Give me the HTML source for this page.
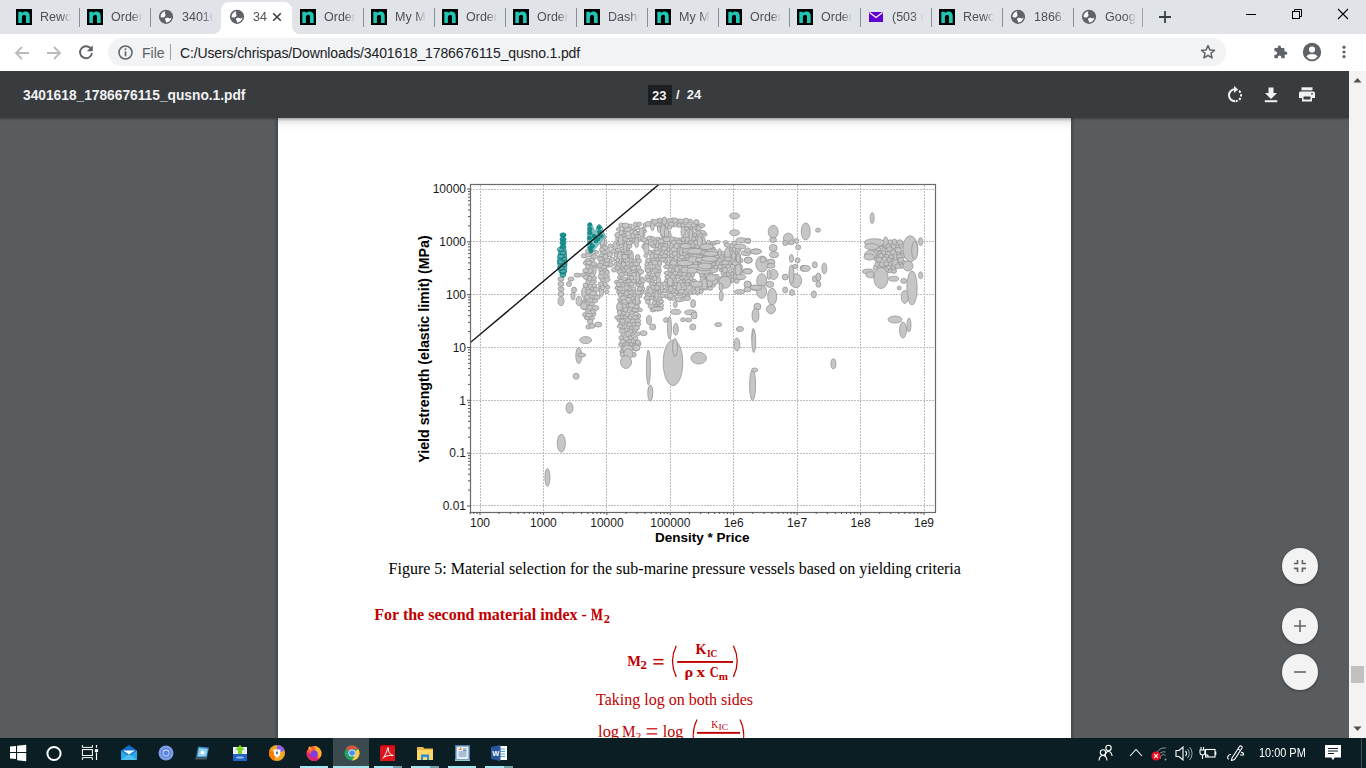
<!DOCTYPE html>
<html><head><meta charset="utf-8"><style>
html,body{margin:0;padding:0;width:1366px;height:768px;overflow:hidden;background:#fff;position:relative;font-family:'Liberation Sans',sans-serif}
</style></head><body>
<!-- TAB STRIP -->
<div style="position:absolute;left:0;top:0;width:1366px;height:34px;background:#e0e3e8"></div>
<div style="position:absolute;left:16px;top:9px;width:16px;height:16px;background:#000"></div><svg style="position:absolute;left:16px;top:9px" width="16" height="16" viewBox="0 0 16 16"><path d="M2.3 14V2.8h3.6v1.3C6.8 3 8 2.4 9.6 2.4c2.6 0 4.1 1.6 4.1 4.5V14H10V7.8c0-1.4-.6-2.1-1.8-2.1-1.3 0-2.3.9-2.3 2.5V14z" fill="#1fc6b4"/></svg>
<div style="position:absolute;left:40px;top:9px;width:31px;height:17px;overflow:hidden;font:12.5px 'Liberation Sans',sans-serif;line-height:16px;color:#4d5054;white-space:nowrap;-webkit-mask-image:linear-gradient(to right,#000 21px,transparent 31px)">Rework</div>
<div style="position:absolute;left:79px;top:8px;width:1px;height:19px;background:#8a8f94"></div>
<div style="position:absolute;left:87px;top:9px;width:16px;height:16px;background:#000"></div><svg style="position:absolute;left:87px;top:9px" width="16" height="16" viewBox="0 0 16 16"><path d="M2.3 14V2.8h3.6v1.3C6.8 3 8 2.4 9.6 2.4c2.6 0 4.1 1.6 4.1 4.5V14H10V7.8c0-1.4-.6-2.1-1.8-2.1-1.3 0-2.3.9-2.3 2.5V14z" fill="#1fc6b4"/></svg>
<div style="position:absolute;left:111px;top:9px;width:31px;height:17px;overflow:hidden;font:12.5px 'Liberation Sans',sans-serif;line-height:16px;color:#4d5054;white-space:nowrap;-webkit-mask-image:linear-gradient(to right,#000 21px,transparent 31px)">Orders</div>
<div style="position:absolute;left:150px;top:8px;width:1px;height:19px;background:#8a8f94"></div>
<svg style="position:absolute;left:158px;top:8px" width="16" height="16" viewBox="0 0 16 16"><circle cx="8" cy="8.85" r="7.1" fill="#5f6368"/><path d="M2.6 9.2A5.5 5.5 0 0 1 7.6 3.3C6.8 4.3 6.4 5.2 7.2 6.1 8 7 7.4 8.6 6 9.2 4.8 9.6 3.7 9.2 2.6 9.2z" fill="#fff"/><path d="M13.5 9.2A5.5 5.5 0 0 1 7.9 14.4C8.3 13.4 7.8 12.6 7.2 12 6.6 11.1 7.6 9.8 9 9.8 10.4 9.8 11.2 11 12.3 10.3 12.9 9.9 13.2 9.5 13.5 9.2z" fill="#fff"/></svg>
<div style="position:absolute;left:182px;top:9px;width:31px;height:17px;overflow:hidden;font:12.5px 'Liberation Sans',sans-serif;line-height:16px;color:#4d5054;white-space:nowrap;-webkit-mask-image:linear-gradient(to right,#000 21px,transparent 31px)">34016</div>
<svg style="position:absolute;left:213px;top:1px" width="87" height="33" viewBox="0 0 87 33"><path d="M0 33a8 8 0 0 0 8-8V9a8 8 0 0 1 8-8h55a8 8 0 0 1 8 8v16a8 8 0 0 0 8 8z" fill="#fff"/></svg>
<svg style="position:absolute;left:229px;top:8px" width="16" height="16" viewBox="0 0 16 16"><circle cx="8" cy="8.85" r="7.1" fill="#5f6368"/><path d="M2.6 9.2A5.5 5.5 0 0 1 7.6 3.3C6.8 4.3 6.4 5.2 7.2 6.1 8 7 7.4 8.6 6 9.2 4.8 9.6 3.7 9.2 2.6 9.2z" fill="#fff"/><path d="M13.5 9.2A5.5 5.5 0 0 1 7.9 14.4C8.3 13.4 7.8 12.6 7.2 12 6.6 11.1 7.6 9.8 9 9.8 10.4 9.8 11.2 11 12.3 10.3 12.9 9.9 13.2 9.5 13.5 9.2z" fill="#fff"/></svg>
<div style="position:absolute;left:253px;top:9px;width:27px;height:17px;overflow:hidden;font:12.5px 'Liberation Sans',sans-serif;line-height:16px;color:#4d5054;white-space:nowrap;-webkit-mask-image:linear-gradient(to right,#000 17px,transparent 27px)">34</div>
<svg style="position:absolute;left:271px;top:11px" width="12" height="12" viewBox="0 0 12 12"><path d="M2.2 2.2l7.6 7.6M9.8 2.2L2.2 9.8" stroke="#3c4043" stroke-width="1.6"/></svg>
<div style="position:absolute;left:300px;top:9px;width:16px;height:16px;background:#000"></div><svg style="position:absolute;left:300px;top:9px" width="16" height="16" viewBox="0 0 16 16"><path d="M2.3 14V2.8h3.6v1.3C6.8 3 8 2.4 9.6 2.4c2.6 0 4.1 1.6 4.1 4.5V14H10V7.8c0-1.4-.6-2.1-1.8-2.1-1.3 0-2.3.9-2.3 2.5V14z" fill="#1fc6b4"/></svg>
<div style="position:absolute;left:324px;top:9px;width:31px;height:17px;overflow:hidden;font:12.5px 'Liberation Sans',sans-serif;line-height:16px;color:#4d5054;white-space:nowrap;-webkit-mask-image:linear-gradient(to right,#000 21px,transparent 31px)">Orders</div>
<div style="position:absolute;left:363px;top:8px;width:1px;height:19px;background:#8a8f94"></div>
<div style="position:absolute;left:371px;top:9px;width:16px;height:16px;background:#000"></div><svg style="position:absolute;left:371px;top:9px" width="16" height="16" viewBox="0 0 16 16"><path d="M2.3 14V2.8h3.6v1.3C6.8 3 8 2.4 9.6 2.4c2.6 0 4.1 1.6 4.1 4.5V14H10V7.8c0-1.4-.6-2.1-1.8-2.1-1.3 0-2.3.9-2.3 2.5V14z" fill="#1fc6b4"/></svg>
<div style="position:absolute;left:395px;top:9px;width:31px;height:17px;overflow:hidden;font:12.5px 'Liberation Sans',sans-serif;line-height:16px;color:#4d5054;white-space:nowrap;-webkit-mask-image:linear-gradient(to right,#000 21px,transparent 31px)">My M</div>
<div style="position:absolute;left:434px;top:8px;width:1px;height:19px;background:#8a8f94"></div>
<div style="position:absolute;left:442px;top:9px;width:16px;height:16px;background:#000"></div><svg style="position:absolute;left:442px;top:9px" width="16" height="16" viewBox="0 0 16 16"><path d="M2.3 14V2.8h3.6v1.3C6.8 3 8 2.4 9.6 2.4c2.6 0 4.1 1.6 4.1 4.5V14H10V7.8c0-1.4-.6-2.1-1.8-2.1-1.3 0-2.3.9-2.3 2.5V14z" fill="#1fc6b4"/></svg>
<div style="position:absolute;left:466px;top:9px;width:31px;height:17px;overflow:hidden;font:12.5px 'Liberation Sans',sans-serif;line-height:16px;color:#4d5054;white-space:nowrap;-webkit-mask-image:linear-gradient(to right,#000 21px,transparent 31px)">Orders</div>
<div style="position:absolute;left:505px;top:8px;width:1px;height:19px;background:#8a8f94"></div>
<div style="position:absolute;left:513px;top:9px;width:16px;height:16px;background:#000"></div><svg style="position:absolute;left:513px;top:9px" width="16" height="16" viewBox="0 0 16 16"><path d="M2.3 14V2.8h3.6v1.3C6.8 3 8 2.4 9.6 2.4c2.6 0 4.1 1.6 4.1 4.5V14H10V7.8c0-1.4-.6-2.1-1.8-2.1-1.3 0-2.3.9-2.3 2.5V14z" fill="#1fc6b4"/></svg>
<div style="position:absolute;left:537px;top:9px;width:31px;height:17px;overflow:hidden;font:12.5px 'Liberation Sans',sans-serif;line-height:16px;color:#4d5054;white-space:nowrap;-webkit-mask-image:linear-gradient(to right,#000 21px,transparent 31px)">Orders</div>
<div style="position:absolute;left:576px;top:8px;width:1px;height:19px;background:#8a8f94"></div>
<div style="position:absolute;left:584px;top:9px;width:16px;height:16px;background:#000"></div><svg style="position:absolute;left:584px;top:9px" width="16" height="16" viewBox="0 0 16 16"><path d="M2.3 14V2.8h3.6v1.3C6.8 3 8 2.4 9.6 2.4c2.6 0 4.1 1.6 4.1 4.5V14H10V7.8c0-1.4-.6-2.1-1.8-2.1-1.3 0-2.3.9-2.3 2.5V14z" fill="#1fc6b4"/></svg>
<div style="position:absolute;left:608px;top:9px;width:31px;height:17px;overflow:hidden;font:12.5px 'Liberation Sans',sans-serif;line-height:16px;color:#4d5054;white-space:nowrap;-webkit-mask-image:linear-gradient(to right,#000 21px,transparent 31px)">Dashb</div>
<div style="position:absolute;left:647px;top:8px;width:1px;height:19px;background:#8a8f94"></div>
<div style="position:absolute;left:655px;top:9px;width:16px;height:16px;background:#000"></div><svg style="position:absolute;left:655px;top:9px" width="16" height="16" viewBox="0 0 16 16"><path d="M2.3 14V2.8h3.6v1.3C6.8 3 8 2.4 9.6 2.4c2.6 0 4.1 1.6 4.1 4.5V14H10V7.8c0-1.4-.6-2.1-1.8-2.1-1.3 0-2.3.9-2.3 2.5V14z" fill="#1fc6b4"/></svg>
<div style="position:absolute;left:679px;top:9px;width:31px;height:17px;overflow:hidden;font:12.5px 'Liberation Sans',sans-serif;line-height:16px;color:#4d5054;white-space:nowrap;-webkit-mask-image:linear-gradient(to right,#000 21px,transparent 31px)">My M</div>
<div style="position:absolute;left:718px;top:8px;width:1px;height:19px;background:#8a8f94"></div>
<div style="position:absolute;left:726px;top:9px;width:16px;height:16px;background:#000"></div><svg style="position:absolute;left:726px;top:9px" width="16" height="16" viewBox="0 0 16 16"><path d="M2.3 14V2.8h3.6v1.3C6.8 3 8 2.4 9.6 2.4c2.6 0 4.1 1.6 4.1 4.5V14H10V7.8c0-1.4-.6-2.1-1.8-2.1-1.3 0-2.3.9-2.3 2.5V14z" fill="#1fc6b4"/></svg>
<div style="position:absolute;left:750px;top:9px;width:31px;height:17px;overflow:hidden;font:12.5px 'Liberation Sans',sans-serif;line-height:16px;color:#4d5054;white-space:nowrap;-webkit-mask-image:linear-gradient(to right,#000 21px,transparent 31px)">Orders</div>
<div style="position:absolute;left:789px;top:8px;width:1px;height:19px;background:#8a8f94"></div>
<div style="position:absolute;left:797px;top:9px;width:16px;height:16px;background:#000"></div><svg style="position:absolute;left:797px;top:9px" width="16" height="16" viewBox="0 0 16 16"><path d="M2.3 14V2.8h3.6v1.3C6.8 3 8 2.4 9.6 2.4c2.6 0 4.1 1.6 4.1 4.5V14H10V7.8c0-1.4-.6-2.1-1.8-2.1-1.3 0-2.3.9-2.3 2.5V14z" fill="#1fc6b4"/></svg>
<div style="position:absolute;left:821px;top:9px;width:31px;height:17px;overflow:hidden;font:12.5px 'Liberation Sans',sans-serif;line-height:16px;color:#4d5054;white-space:nowrap;-webkit-mask-image:linear-gradient(to right,#000 21px,transparent 31px)">Orders</div>
<div style="position:absolute;left:860px;top:8px;width:1px;height:19px;background:#8a8f94"></div>
<svg style="position:absolute;left:868px;top:9px" width="16" height="16" viewBox="0 0 16 16"><rect x="1" y="3" width="14" height="10" fill="#6001d2"/><path d="M1.5 3.5L8 8.5l6.5-5" fill="none" stroke="#fff" stroke-width="1.3"/></svg>
<div style="position:absolute;left:892px;top:9px;width:31px;height:17px;overflow:hidden;font:12.5px 'Liberation Sans',sans-serif;line-height:16px;color:#4d5054;white-space:nowrap;-webkit-mask-image:linear-gradient(to right,#000 21px,transparent 31px)">(503 u</div>
<div style="position:absolute;left:931px;top:8px;width:1px;height:19px;background:#8a8f94"></div>
<div style="position:absolute;left:939px;top:9px;width:16px;height:16px;background:#000"></div><svg style="position:absolute;left:939px;top:9px" width="16" height="16" viewBox="0 0 16 16"><path d="M2.3 14V2.8h3.6v1.3C6.8 3 8 2.4 9.6 2.4c2.6 0 4.1 1.6 4.1 4.5V14H10V7.8c0-1.4-.6-2.1-1.8-2.1-1.3 0-2.3.9-2.3 2.5V14z" fill="#1fc6b4"/></svg>
<div style="position:absolute;left:963px;top:9px;width:31px;height:17px;overflow:hidden;font:12.5px 'Liberation Sans',sans-serif;line-height:16px;color:#4d5054;white-space:nowrap;-webkit-mask-image:linear-gradient(to right,#000 21px,transparent 31px)">Rework</div>
<div style="position:absolute;left:1002px;top:8px;width:1px;height:19px;background:#8a8f94"></div>
<svg style="position:absolute;left:1010px;top:8px" width="16" height="16" viewBox="0 0 16 16"><circle cx="8" cy="8.85" r="7.1" fill="#5f6368"/><path d="M2.6 9.2A5.5 5.5 0 0 1 7.6 3.3C6.8 4.3 6.4 5.2 7.2 6.1 8 7 7.4 8.6 6 9.2 4.8 9.6 3.7 9.2 2.6 9.2z" fill="#fff"/><path d="M13.5 9.2A5.5 5.5 0 0 1 7.9 14.4C8.3 13.4 7.8 12.6 7.2 12 6.6 11.1 7.6 9.8 9 9.8 10.4 9.8 11.2 11 12.3 10.3 12.9 9.9 13.2 9.5 13.5 9.2z" fill="#fff"/></svg>
<div style="position:absolute;left:1034px;top:9px;width:31px;height:17px;overflow:hidden;font:12.5px 'Liberation Sans',sans-serif;line-height:16px;color:#4d5054;white-space:nowrap;-webkit-mask-image:linear-gradient(to right,#000 21px,transparent 31px)">18661</div>
<div style="position:absolute;left:1073px;top:8px;width:1px;height:19px;background:#8a8f94"></div>
<svg style="position:absolute;left:1081px;top:8px" width="16" height="16" viewBox="0 0 16 16"><circle cx="8" cy="8.85" r="7.1" fill="#5f6368"/><path d="M2.6 9.2A5.5 5.5 0 0 1 7.6 3.3C6.8 4.3 6.4 5.2 7.2 6.1 8 7 7.4 8.6 6 9.2 4.8 9.6 3.7 9.2 2.6 9.2z" fill="#fff"/><path d="M13.5 9.2A5.5 5.5 0 0 1 7.9 14.4C8.3 13.4 7.8 12.6 7.2 12 6.6 11.1 7.6 9.8 9 9.8 10.4 9.8 11.2 11 12.3 10.3 12.9 9.9 13.2 9.5 13.5 9.2z" fill="#fff"/></svg>
<div style="position:absolute;left:1105px;top:9px;width:31px;height:17px;overflow:hidden;font:12.5px 'Liberation Sans',sans-serif;line-height:16px;color:#4d5054;white-space:nowrap;-webkit-mask-image:linear-gradient(to right,#000 21px,transparent 31px)">Google</div>
<!-- TOOLBAR -->
<div style="position:absolute;left:0;top:34px;width:1366px;height:37px;background:#fff"></div>
<div style="position:absolute;left:108px;top:38px;width:1118px;height:28px;border-radius:14px;background:#f1f3f4"></div>
<!-- back/forward/reload -->
<svg style="position:absolute;left:13px;top:44px" width="18" height="18" viewBox="0 0 18 18"><path d="M16 9H3.5M9 3L3 9l6 6" fill="none" stroke="#b9bcbf" stroke-width="1.8"/></svg>
<svg style="position:absolute;left:45px;top:44px" width="18" height="18" viewBox="0 0 18 18"><path d="M2 9h12.5M9 3l6 6-6 6" fill="none" stroke="#b9bcbf" stroke-width="1.8"/></svg>
<svg style="position:absolute;left:77px;top:43px" width="18" height="18" viewBox="0 0 18 18"><path d="M14.2 6.2A6 6 0 1 0 15 10" fill="none" stroke="#5f6368" stroke-width="1.9"/><path d="M15.8 2.2v6h-6z" fill="#5f6368"/></svg>
<svg style="position:absolute;left:118px;top:45px" width="15" height="15" viewBox="0 0 15 15"><circle cx="7.5" cy="7.5" r="6.5" fill="none" stroke="#5f6368" stroke-width="1.5"/><rect x="6.7" y="6.3" width="1.6" height="5" fill="#5f6368"/><rect x="6.7" y="3.4" width="1.6" height="1.7" fill="#5f6368"/></svg>
<div style="position:absolute;left:142px;top:44px;font:14px 'Liberation Sans',sans-serif;color:#5f6368;line-height:18px">File</div>
<div style="position:absolute;left:170px;top:44px;width:1px;height:16px;background:#9aa0a6"></div>
<div style="position:absolute;left:180px;top:44px;font:14px 'Liberation Sans',sans-serif;letter-spacing:-0.13px;color:#202124;line-height:18px;white-space:nowrap">C:/Users/chrispas/Downloads/3401618_1786676115_qusno.1.pdf</div>
<!-- star -->
<svg style="position:absolute;left:1200px;top:44px" width="16" height="16" viewBox="0 0 16 16"><path d="M8 1.6l1.9 4.3 4.6.4-3.5 3 1.1 4.6L8 11.5l-4.1 2.4L5 9.3 1.5 6.3l4.6-.4z" fill="none" stroke="#5f6368" stroke-width="1.5" stroke-linejoin="round"/></svg>
<!-- puzzle -->
<svg style="position:absolute;left:1272px;top:44px" width="16" height="16" viewBox="0 0 16 16"><path d="M13.5 7.5h-1V5c0-.6-.4-1-1-1H9V3a1.6 1.6 0 0 0-3.2 0v1H3.4c-.6 0-1 .4-1 1v2.3h.9a1.8 1.8 0 0 1 0 3.6h-.9v2.4c0 .6.4 1 1 1h2.4v-.9a1.8 1.8 0 0 1 3.6 0v.9h2.3c.6 0 1-.4 1-1v-2.5h1a1.6 1.6 0 0 0 0-3.3z" fill="#5f6368"/></svg>
<!-- profile -->
<svg style="position:absolute;left:1302px;top:42px" width="20" height="20" viewBox="0 0 20 20"><circle cx="10" cy="10" r="9.2" fill="#5f6368"/><circle cx="10" cy="7.6" r="3.1" fill="#fff"/><path d="M4.3 14.6c1.2-1.8 3.4-2.6 5.7-2.6s4.5.8 5.7 2.6A7.2 7.2 0 0 1 10 17.4a7.2 7.2 0 0 1-5.7-2.8z" fill="#fff"/></svg>
<!-- kebab -->
<svg style="position:absolute;left:1341px;top:44px" width="6" height="16" viewBox="0 0 6 16"><circle cx="3" cy="3.2" r="1.6" fill="#5f6368"/><circle cx="3" cy="8" r="1.6" fill="#5f6368"/><circle cx="3" cy="12.6" r="1.6" fill="#5f6368"/></svg>
<!-- window controls -->
<div style="position:absolute;left:1246px;top:14px;width:10px;height:1px;background:#000"></div>
<svg style="position:absolute;left:1291px;top:8px" width="12" height="12" viewBox="0 0 12 12"><rect x="1.5" y="3.5" width="7" height="7" fill="none" stroke="#000" stroke-width="1"/><path d="M3.5 3.5V1.5h7v7H8.5" fill="none" stroke="#000" stroke-width="1"/></svg>
<svg style="position:absolute;left:1337px;top:8px" width="12" height="12" viewBox="0 0 12 12"><path d="M1 1l10 10M11 1L1 11" stroke="#000" stroke-width="1.1"/></svg>
<!-- new tab plus -->
<div style="position:absolute;left:1142px;top:8px;width:1px;height:19px;background:#9aa0a6"></div>
<svg style="position:absolute;left:1158px;top:10px" width="14" height="14" viewBox="0 0 14 14"><path d="M7 1v12M1 7h12" stroke="#3c4043" stroke-width="1.8"/></svg>

<!-- PDF TOOLBAR -->
<div style="position:absolute;left:0;top:71px;width:1349px;height:47px;background:#383c3f"></div>
<div style="position:absolute;left:0;top:118px;width:1349px;height:620px;background:#585c5f"></div>
<div style="position:absolute;left:23px;top:87px;font:bold 13.75px 'Liberation Sans',sans-serif;color:#f1f1f1;line-height:18px;white-space:nowrap">3401618_1786676115_qusno.1.pdf</div>
<div style="position:absolute;left:648px;top:85px;width:24px;height:20px;background:#1c1e1f"></div>
<div style="position:absolute;left:652px;top:88px;font:bold 13px 'Liberation Sans',sans-serif;color:#f1f1f1;line-height:16px">23</div>
<div style="position:absolute;left:676px;top:87px;font:bold 13px 'Liberation Sans',sans-serif;color:#f1f1f1;line-height:16px;white-space:nowrap">/&nbsp;&nbsp;24</div>
<!-- rotate -->
<svg style="position:absolute;left:1225px;top:84px" width="20" height="20" viewBox="0 0 20 20"><path d="M10 5.3A6 6 0 1 0 10 17.3" fill="none" stroke="#f1f1f1" stroke-width="2"/><path d="M10.6 17.3A6 6 0 0 0 12.5 5.85" fill="none" stroke="#f1f1f1" stroke-width="2" stroke-dasharray="2.2,1.6"/><path d="M9 1.8l4 3.7-4 3.5z" fill="#f1f1f1"/></svg>
<!-- download -->
<svg style="position:absolute;left:1262px;top:85px" width="18" height="18" viewBox="0 0 18 18"><path d="M6.5 2.5h5v5.5h3.5L9 14 3 8h3.5z" fill="#f1f1f1"/><rect x="2.8" y="15.2" width="12.4" height="2" fill="#f1f1f1"/></svg>
<!-- print -->
<svg style="position:absolute;left:1298px;top:85px" width="18" height="18" viewBox="0 0 18 18"><rect x="3.5" y="2.3" width="11" height="3" fill="#f1f1f1"/><path d="M2.5 6.5h13a1.5 1.5 0 0 1 1.5 1.5v5h-3v3.5H4V13H1V8a1.5 1.5 0 0 1 1.5-1.5z" fill="#f1f1f1"/><rect x="5.5" y="11.5" width="7" height="3" fill="#383c3f"/><circle cx="14" cy="8.8" r=".9" fill="#383c3f"/></svg>

<!-- SCROLLBAR -->
<div style="position:absolute;left:1349px;top:71px;width:17px;height:667px;background:#f3f3f3"></div>
<svg style="position:absolute;left:1353px;top:77px" width="9" height="6" viewBox="0 0 9 6"><path d="M0.5 5.5L4.5 1l4 4.5z" fill="#505050"/></svg>
<svg style="position:absolute;left:1353px;top:726px" width="9" height="6" viewBox="0 0 9 6"><path d="M0.5 .5L4.5 5l4-4.5z" fill="#505050"/></svg>
<div style="position:absolute;left:1351px;top:666px;width:13px;height:17px;background:#c1c1c1"></div>

<!-- FABs -->
<div style="position:absolute;left:1282px;top:548px;width:36px;height:36px;border-radius:50%;background:#f3f3f3;box-shadow:0 1px 3px rgba(0,0,0,.3)"></div>
<svg style="position:absolute;left:1291px;top:557px" width="18" height="18" viewBox="0 0 18 18"><path d="M6.5 2.9V6.5H2.9M11.4 2.9V6.5H15M6.5 15V11.4H2.9M11.4 15V11.4H15" fill="none" stroke="#5f6368" stroke-width="1.6"/></svg>
<div style="position:absolute;left:1282px;top:608px;width:36px;height:36px;border-radius:50%;background:#f3f3f3;box-shadow:0 1px 3px rgba(0,0,0,.3)"></div>
<svg style="position:absolute;left:1291px;top:617px" width="18" height="18" viewBox="0 0 18 18"><path d="M9 3v12M3 9h12" stroke="#666" stroke-width="1.6"/></svg>
<div style="position:absolute;left:1282px;top:654px;width:36px;height:36px;border-radius:50%;background:#f3f3f3;box-shadow:0 1px 3px rgba(0,0,0,.3)"></div>
<svg style="position:absolute;left:1291px;top:663px" width="18" height="18" viewBox="0 0 18 18"><path d="M3 9h12" stroke="#666" stroke-width="1.6"/></svg>

<!-- PAGE -->
<div style="position:absolute;left:274px;top:118px;width:801px;height:620px;background:linear-gradient(to right,rgba(0,0,0,0),rgba(0,0,0,.22) 4px,rgba(0,0,0,0) 4px,rgba(0,0,0,0) 797px,rgba(0,0,0,.22) 797px,rgba(0,0,0,0))"></div>
<div style="position:absolute;left:278px;top:118px;width:793px;height:620px;background:#fff;overflow:hidden">
<svg style="position:absolute;left:-278px;top:-118px" width="1366" height="768" viewBox="0 0 1366 768">
<defs><clipPath id="pc"><rect x="470" y="184" width="465" height="328"/></clipPath></defs>
<line x1="480.5" y1="185" x2="480.5" y2="512" stroke="#bcbcbc" stroke-width="1" stroke-dasharray="2,1"/><line x1="543.5" y1="185" x2="543.5" y2="512" stroke="#bcbcbc" stroke-width="1" stroke-dasharray="2,1"/><line x1="606.5" y1="185" x2="606.5" y2="512" stroke="#bcbcbc" stroke-width="1" stroke-dasharray="2,1"/><line x1="670.5" y1="185" x2="670.5" y2="512" stroke="#bcbcbc" stroke-width="1" stroke-dasharray="2,1"/><line x1="733.5" y1="185" x2="733.5" y2="512" stroke="#bcbcbc" stroke-width="1" stroke-dasharray="2,1"/><line x1="797.5" y1="185" x2="797.5" y2="512" stroke="#bcbcbc" stroke-width="1" stroke-dasharray="2,1"/><line x1="860.5" y1="185" x2="860.5" y2="512" stroke="#bcbcbc" stroke-width="1" stroke-dasharray="2,1"/><line x1="924.5" y1="185" x2="924.5" y2="512" stroke="#bcbcbc" stroke-width="1" stroke-dasharray="2,1"/><line x1="470" y1="505.5" x2="935" y2="505.5" stroke="#bcbcbc" stroke-width="1" stroke-dasharray="2,1"/><line x1="470" y1="453.5" x2="935" y2="453.5" stroke="#bcbcbc" stroke-width="1" stroke-dasharray="2,1"/><line x1="470" y1="400.5" x2="935" y2="400.5" stroke="#bcbcbc" stroke-width="1" stroke-dasharray="2,1"/><line x1="470" y1="347.5" x2="935" y2="347.5" stroke="#bcbcbc" stroke-width="1" stroke-dasharray="2,1"/><line x1="470" y1="294.5" x2="935" y2="294.5" stroke="#bcbcbc" stroke-width="1" stroke-dasharray="2,1"/><line x1="470" y1="241.5" x2="935" y2="241.5" stroke="#bcbcbc" stroke-width="1" stroke-dasharray="2,1"/><line x1="470" y1="189.5" x2="935" y2="189.5" stroke="#bcbcbc" stroke-width="1" stroke-dasharray="2,1"/>
<g clip-path="url(#pc)">
<ellipse cx="591.6" cy="303.8" rx="2.9" ry="2.0" fill="#c6c6c6" stroke="#939393" stroke-width="0.75"/><ellipse cx="591.2" cy="296.4" rx="3.6" ry="2.2" fill="#c6c6c6" stroke="#939393" stroke-width="0.75"/><ellipse cx="587.0" cy="274.5" rx="2.7" ry="4.5" fill="#c6c6c6" stroke="#939393" stroke-width="0.75"/><ellipse cx="583.7" cy="274.8" rx="3.4" ry="1.9" fill="#c6c6c6" stroke="#939393" stroke-width="0.75"/><ellipse cx="595.7" cy="252.3" rx="3.2" ry="1.9" fill="#c6c6c6" stroke="#939393" stroke-width="0.75"/><ellipse cx="586.2" cy="262.9" rx="2.9" ry="2.2" fill="#c6c6c6" stroke="#939393" stroke-width="0.75"/><ellipse cx="591.0" cy="317.8" rx="3.5" ry="2.3" fill="#c6c6c6" stroke="#939393" stroke-width="0.75"/><ellipse cx="586.1" cy="300.9" rx="3.3" ry="1.9" fill="#c6c6c6" stroke="#939393" stroke-width="0.75"/><ellipse cx="594.2" cy="300.9" rx="3.6" ry="1.8" fill="#c6c6c6" stroke="#939393" stroke-width="0.75"/><ellipse cx="587.2" cy="317.6" rx="2.9" ry="2.3" fill="#c6c6c6" stroke="#939393" stroke-width="0.75"/><ellipse cx="584.2" cy="255.8" rx="3.1" ry="2.1" fill="#c6c6c6" stroke="#939393" stroke-width="0.75"/><ellipse cx="588.4" cy="326.9" rx="2.5" ry="2.2" fill="#c6c6c6" stroke="#939393" stroke-width="0.75"/><ellipse cx="584.2" cy="292.7" rx="2.6" ry="5.7" fill="#c6c6c6" stroke="#939393" stroke-width="0.75"/><ellipse cx="588.9" cy="255.2" rx="3.3" ry="1.9" fill="#c6c6c6" stroke="#939393" stroke-width="0.75"/><ellipse cx="584.1" cy="307.3" rx="2.6" ry="2.4" fill="#c6c6c6" stroke="#939393" stroke-width="0.75"/><ellipse cx="588.0" cy="290.1" rx="1.9" ry="5.0" fill="#c6c6c6" stroke="#939393" stroke-width="0.75"/><ellipse cx="588.0" cy="251.4" rx="2.7" ry="2.2" fill="#c6c6c6" stroke="#939393" stroke-width="0.75"/><ellipse cx="587.9" cy="266.8" rx="2.4" ry="2.3" fill="#c6c6c6" stroke="#939393" stroke-width="0.75"/><ellipse cx="589.5" cy="270.9" rx="3.2" ry="2.4" fill="#c6c6c6" stroke="#939393" stroke-width="0.75"/><ellipse cx="589.4" cy="300.0" rx="3.4" ry="2.4" fill="#c6c6c6" stroke="#939393" stroke-width="0.75"/><ellipse cx="590.7" cy="286.3" rx="2.5" ry="2.2" fill="#c6c6c6" stroke="#939393" stroke-width="0.75"/><ellipse cx="596.9" cy="297.2" rx="3.3" ry="2.2" fill="#c6c6c6" stroke="#939393" stroke-width="0.75"/><ellipse cx="592.3" cy="266.1" rx="2.5" ry="1.9" fill="#c6c6c6" stroke="#939393" stroke-width="0.75"/><ellipse cx="593.0" cy="288.7" rx="2.5" ry="1.8" fill="#c6c6c6" stroke="#939393" stroke-width="0.75"/><ellipse cx="587.9" cy="260.6" rx="3.0" ry="2.1" fill="#c6c6c6" stroke="#939393" stroke-width="0.75"/><ellipse cx="593.1" cy="281.4" rx="3.4" ry="1.8" fill="#c6c6c6" stroke="#939393" stroke-width="0.75"/><ellipse cx="594.4" cy="285.7" rx="2.4" ry="1.9" fill="#c6c6c6" stroke="#939393" stroke-width="0.75"/><ellipse cx="585.5" cy="285.3" rx="2.3" ry="2.4" fill="#c6c6c6" stroke="#939393" stroke-width="0.75"/><ellipse cx="584.1" cy="303.1" rx="2.7" ry="2.5" fill="#c6c6c6" stroke="#939393" stroke-width="0.75"/><ellipse cx="592.4" cy="259.5" rx="2.6" ry="2.0" fill="#c6c6c6" stroke="#939393" stroke-width="0.75"/><ellipse cx="586.5" cy="277.3" rx="3.3" ry="2.2" fill="#c6c6c6" stroke="#939393" stroke-width="0.75"/><ellipse cx="592.1" cy="325.9" rx="3.0" ry="2.4" fill="#c6c6c6" stroke="#939393" stroke-width="0.75"/><ellipse cx="589.1" cy="292.0" rx="3.5" ry="2.4" fill="#c6c6c6" stroke="#939393" stroke-width="0.75"/><ellipse cx="585.7" cy="270.6" rx="2.9" ry="2.1" fill="#c6c6c6" stroke="#939393" stroke-width="0.75"/><ellipse cx="593.7" cy="278.0" rx="2.7" ry="2.3" fill="#c6c6c6" stroke="#939393" stroke-width="0.75"/><ellipse cx="593.4" cy="314.0" rx="2.6" ry="2.0" fill="#c6c6c6" stroke="#939393" stroke-width="0.75"/><ellipse cx="595.6" cy="307.9" rx="3.3" ry="2.5" fill="#c6c6c6" stroke="#939393" stroke-width="0.75"/><ellipse cx="586.8" cy="303.3" rx="2.8" ry="2.0" fill="#c6c6c6" stroke="#939393" stroke-width="0.75"/><ellipse cx="590.2" cy="321.5" rx="2.9" ry="2.3" fill="#c6c6c6" stroke="#939393" stroke-width="0.75"/><ellipse cx="594.3" cy="256.6" rx="3.5" ry="1.9" fill="#c6c6c6" stroke="#939393" stroke-width="0.75"/><ellipse cx="592.3" cy="275.1" rx="2.6" ry="2.3" fill="#c6c6c6" stroke="#939393" stroke-width="0.75"/><ellipse cx="588.0" cy="310.3" rx="2.8" ry="2.1" fill="#c6c6c6" stroke="#939393" stroke-width="0.75"/><ellipse cx="585.0" cy="314.7" rx="2.4" ry="2.1" fill="#c6c6c6" stroke="#939393" stroke-width="0.75"/><ellipse cx="587.3" cy="297.2" rx="2.9" ry="2.3" fill="#c6c6c6" stroke="#939393" stroke-width="0.75"/><ellipse cx="589.0" cy="262.6" rx="3.0" ry="2.0" fill="#c6c6c6" stroke="#939393" stroke-width="0.75"/><ellipse cx="588.2" cy="281.9" rx="2.4" ry="2.4" fill="#c6c6c6" stroke="#939393" stroke-width="0.75"/><ellipse cx="588.9" cy="315.1" rx="3.4" ry="1.9" fill="#c6c6c6" stroke="#939393" stroke-width="0.75"/><ellipse cx="595.7" cy="266.4" rx="3.5" ry="1.9" fill="#c6c6c6" stroke="#939393" stroke-width="0.75"/><ellipse cx="592.3" cy="252.0" rx="3.4" ry="2.4" fill="#c6c6c6" stroke="#939393" stroke-width="0.75"/><ellipse cx="593.4" cy="293.3" rx="3.5" ry="2.1" fill="#c6c6c6" stroke="#939393" stroke-width="0.75"/><ellipse cx="594.0" cy="264.0" rx="3.0" ry="2.1" fill="#c6c6c6" stroke="#939393" stroke-width="0.75"/><ellipse cx="589.6" cy="307.6" rx="2.7" ry="2.4" fill="#c6c6c6" stroke="#939393" stroke-width="0.75"/><ellipse cx="596.5" cy="289.4" rx="3.5" ry="2.0" fill="#c6c6c6" stroke="#939393" stroke-width="0.75"/><ellipse cx="594.4" cy="270.3" rx="1.7" ry="4.3" fill="#c6c6c6" stroke="#939393" stroke-width="0.75"/><ellipse cx="593.2" cy="311.7" rx="2.6" ry="2.0" fill="#c6c6c6" stroke="#939393" stroke-width="0.75"/><ellipse cx="589.7" cy="278.6" rx="2.3" ry="2.5" fill="#c6c6c6" stroke="#939393" stroke-width="0.75"/><ellipse cx="602.7" cy="245.1" rx="2.4" ry="6.4" fill="#c6c6c6" stroke="#939393" stroke-width="0.75"/><ellipse cx="606.8" cy="276.6" rx="2.7" ry="1.8" fill="#c6c6c6" stroke="#939393" stroke-width="0.75"/><ellipse cx="607.7" cy="252.6" rx="2.2" ry="4.2" fill="#c6c6c6" stroke="#939393" stroke-width="0.75"/><ellipse cx="607.6" cy="265.5" rx="2.7" ry="1.9" fill="#c6c6c6" stroke="#939393" stroke-width="0.75"/><ellipse cx="601.6" cy="269.6" rx="3.3" ry="1.9" fill="#c6c6c6" stroke="#939393" stroke-width="0.75"/><ellipse cx="604.5" cy="247.8" rx="3.1" ry="2.2" fill="#c6c6c6" stroke="#939393" stroke-width="0.75"/><ellipse cx="603.4" cy="251.8" rx="3.2" ry="2.0" fill="#c6c6c6" stroke="#939393" stroke-width="0.75"/><ellipse cx="603.7" cy="237.3" rx="2.5" ry="2.3" fill="#c6c6c6" stroke="#939393" stroke-width="0.75"/><ellipse cx="602.3" cy="272.8" rx="3.2" ry="1.9" fill="#c6c6c6" stroke="#939393" stroke-width="0.75"/><ellipse cx="607.5" cy="287.1" rx="2.5" ry="1.8" fill="#c6c6c6" stroke="#939393" stroke-width="0.75"/><ellipse cx="604.8" cy="242.6" rx="2.4" ry="2.3" fill="#c6c6c6" stroke="#939393" stroke-width="0.75"/><ellipse cx="601.6" cy="256.1" rx="3.0" ry="2.4" fill="#c6c6c6" stroke="#939393" stroke-width="0.75"/><ellipse cx="605.0" cy="284.5" rx="2.4" ry="2.2" fill="#c6c6c6" stroke="#939393" stroke-width="0.75"/><ellipse cx="606.8" cy="263.8" rx="3.4" ry="1.9" fill="#c6c6c6" stroke="#939393" stroke-width="0.75"/><ellipse cx="602.7" cy="258.8" rx="2.8" ry="2.4" fill="#c6c6c6" stroke="#939393" stroke-width="0.75"/><ellipse cx="601.7" cy="262.1" rx="2.8" ry="2.4" fill="#c6c6c6" stroke="#939393" stroke-width="0.75"/><ellipse cx="603.7" cy="267.1" rx="2.9" ry="2.0" fill="#c6c6c6" stroke="#939393" stroke-width="0.75"/><ellipse cx="602.3" cy="241.2" rx="2.2" ry="4.4" fill="#c6c6c6" stroke="#939393" stroke-width="0.75"/><ellipse cx="601.5" cy="290.2" rx="2.2" ry="6.5" fill="#c6c6c6" stroke="#939393" stroke-width="0.75"/><ellipse cx="600.7" cy="284.3" rx="2.7" ry="2.5" fill="#c6c6c6" stroke="#939393" stroke-width="0.75"/><ellipse cx="606.7" cy="291.7" rx="2.3" ry="1.9" fill="#c6c6c6" stroke="#939393" stroke-width="0.75"/><ellipse cx="601.9" cy="249.7" rx="2.5" ry="2.1" fill="#c6c6c6" stroke="#939393" stroke-width="0.75"/><ellipse cx="599.8" cy="265.4" rx="3.0" ry="2.0" fill="#c6c6c6" stroke="#939393" stroke-width="0.75"/><ellipse cx="600.1" cy="258.9" rx="2.6" ry="2.2" fill="#c6c6c6" stroke="#939393" stroke-width="0.75"/><ellipse cx="602.7" cy="279.8" rx="2.7" ry="1.9" fill="#c6c6c6" stroke="#939393" stroke-width="0.75"/><ellipse cx="607.1" cy="260.1" rx="3.0" ry="2.1" fill="#c6c6c6" stroke="#939393" stroke-width="0.75"/><ellipse cx="605.6" cy="270.8" rx="2.7" ry="2.1" fill="#c6c6c6" stroke="#939393" stroke-width="0.75"/><ellipse cx="607.4" cy="279.6" rx="2.6" ry="2.1" fill="#c6c6c6" stroke="#939393" stroke-width="0.75"/><ellipse cx="600.9" cy="276.6" rx="2.7" ry="2.6" fill="#c6c6c6" stroke="#939393" stroke-width="0.75"/><ellipse cx="602.5" cy="287.7" rx="2.2" ry="2.4" fill="#c6c6c6" stroke="#939393" stroke-width="0.75"/><ellipse cx="607.2" cy="272.4" rx="2.3" ry="2.1" fill="#c6c6c6" stroke="#939393" stroke-width="0.75"/><ellipse cx="605.7" cy="256.6" rx="2.3" ry="2.5" fill="#c6c6c6" stroke="#939393" stroke-width="0.75"/><ellipse cx="610.4" cy="246.1" rx="2.5" ry="2.2" fill="#c6c6c6" stroke="#939393" stroke-width="0.75"/><ellipse cx="611.0" cy="264.8" rx="2.3" ry="2.3" fill="#c6c6c6" stroke="#939393" stroke-width="0.75"/><ellipse cx="615.2" cy="246.7" rx="2.2" ry="5.9" fill="#c6c6c6" stroke="#939393" stroke-width="0.75"/><ellipse cx="616.6" cy="255.2" rx="2.7" ry="2.1" fill="#c6c6c6" stroke="#939393" stroke-width="0.75"/><ellipse cx="612.3" cy="259.4" rx="2.7" ry="2.2" fill="#c6c6c6" stroke="#939393" stroke-width="0.75"/><ellipse cx="614.0" cy="269.9" rx="2.4" ry="2.2" fill="#c6c6c6" stroke="#939393" stroke-width="0.75"/><ellipse cx="609.8" cy="254.5" rx="2.6" ry="2.4" fill="#c6c6c6" stroke="#939393" stroke-width="0.75"/><ellipse cx="616.3" cy="264.3" rx="2.2" ry="2.5" fill="#c6c6c6" stroke="#939393" stroke-width="0.75"/><ellipse cx="613.7" cy="251.2" rx="3.1" ry="2.0" fill="#c6c6c6" stroke="#939393" stroke-width="0.75"/><ellipse cx="638.2" cy="274.3" rx="2.6" ry="2.1" fill="#c6c6c6" stroke="#939393" stroke-width="0.75"/><ellipse cx="635.0" cy="294.9" rx="2.1" ry="2.5" fill="#c6c6c6" stroke="#939393" stroke-width="0.75"/><ellipse cx="631.4" cy="264.1" rx="1.8" ry="4.3" fill="#c6c6c6" stroke="#939393" stroke-width="0.75"/><ellipse cx="620.3" cy="310.5" rx="2.7" ry="2.0" fill="#c6c6c6" stroke="#939393" stroke-width="0.75"/><ellipse cx="634.2" cy="324.2" rx="2.3" ry="2.1" fill="#c6c6c6" stroke="#939393" stroke-width="0.75"/><ellipse cx="629.2" cy="288.6" rx="3.1" ry="2.4" fill="#c6c6c6" stroke="#939393" stroke-width="0.75"/><ellipse cx="618.1" cy="238.7" rx="2.5" ry="2.0" fill="#c6c6c6" stroke="#939393" stroke-width="0.75"/><ellipse cx="619.7" cy="291.8" rx="3.2" ry="2.3" fill="#c6c6c6" stroke="#939393" stroke-width="0.75"/><ellipse cx="630.0" cy="274.8" rx="2.2" ry="2.1" fill="#c6c6c6" stroke="#939393" stroke-width="0.75"/><ellipse cx="633.1" cy="229.7" rx="2.8" ry="1.8" fill="#c6c6c6" stroke="#939393" stroke-width="0.75"/><ellipse cx="621.8" cy="317.1" rx="3.2" ry="1.9" fill="#c6c6c6" stroke="#939393" stroke-width="0.75"/><ellipse cx="630.5" cy="308.9" rx="2.4" ry="2.3" fill="#c6c6c6" stroke="#939393" stroke-width="0.75"/><ellipse cx="641.3" cy="278.5" rx="2.2" ry="1.8" fill="#c6c6c6" stroke="#939393" stroke-width="0.75"/><ellipse cx="633.4" cy="270.6" rx="2.5" ry="2.2" fill="#c6c6c6" stroke="#939393" stroke-width="0.75"/><ellipse cx="631.4" cy="242.3" rx="2.5" ry="1.9" fill="#c6c6c6" stroke="#939393" stroke-width="0.75"/><ellipse cx="623.7" cy="285.3" rx="3.0" ry="1.8" fill="#c6c6c6" stroke="#939393" stroke-width="0.75"/><ellipse cx="627.0" cy="285.0" rx="2.1" ry="2.0" fill="#c6c6c6" stroke="#939393" stroke-width="0.75"/><ellipse cx="622.4" cy="267.0" rx="3.1" ry="2.4" fill="#c6c6c6" stroke="#939393" stroke-width="0.75"/><ellipse cx="626.2" cy="322.8" rx="2.3" ry="2.3" fill="#c6c6c6" stroke="#939393" stroke-width="0.75"/><ellipse cx="628.0" cy="250.7" rx="1.8" ry="4.7" fill="#c6c6c6" stroke="#939393" stroke-width="0.75"/><ellipse cx="627.1" cy="256.0" rx="2.1" ry="5.9" fill="#c6c6c6" stroke="#939393" stroke-width="0.75"/><ellipse cx="622.6" cy="327.5" rx="2.7" ry="2.3" fill="#c6c6c6" stroke="#939393" stroke-width="0.75"/><ellipse cx="623.8" cy="234.8" rx="2.2" ry="2.2" fill="#c6c6c6" stroke="#939393" stroke-width="0.75"/><ellipse cx="629.9" cy="344.0" rx="3.0" ry="2.5" fill="#c6c6c6" stroke="#939393" stroke-width="0.75"/><ellipse cx="633.4" cy="354.6" rx="2.8" ry="2.4" fill="#c6c6c6" stroke="#939393" stroke-width="0.75"/><ellipse cx="630.9" cy="268.3" rx="2.3" ry="2.3" fill="#c6c6c6" stroke="#939393" stroke-width="0.75"/><ellipse cx="626.9" cy="263.3" rx="3.1" ry="2.3" fill="#c6c6c6" stroke="#939393" stroke-width="0.75"/><ellipse cx="638.4" cy="239.3" rx="3.0" ry="2.3" fill="#c6c6c6" stroke="#939393" stroke-width="0.75"/><ellipse cx="621.3" cy="337.9" rx="2.4" ry="2.3" fill="#c6c6c6" stroke="#939393" stroke-width="0.75"/><ellipse cx="631.4" cy="256.7" rx="2.1" ry="5.8" fill="#c6c6c6" stroke="#939393" stroke-width="0.75"/><ellipse cx="624.4" cy="270.2" rx="2.9" ry="1.9" fill="#c6c6c6" stroke="#939393" stroke-width="0.75"/><ellipse cx="621.4" cy="225.3" rx="2.6" ry="2.3" fill="#c6c6c6" stroke="#939393" stroke-width="0.75"/><ellipse cx="628.0" cy="270.0" rx="2.9" ry="2.5" fill="#c6c6c6" stroke="#939393" stroke-width="0.75"/><ellipse cx="625.1" cy="231.5" rx="2.9" ry="2.4" fill="#c6c6c6" stroke="#939393" stroke-width="0.75"/><ellipse cx="637.9" cy="301.9" rx="2.7" ry="2.6" fill="#c6c6c6" stroke="#939393" stroke-width="0.75"/><ellipse cx="625.4" cy="309.9" rx="2.3" ry="4.0" fill="#c6c6c6" stroke="#939393" stroke-width="0.75"/><ellipse cx="632.4" cy="341.0" rx="3.3" ry="2.2" fill="#c6c6c6" stroke="#939393" stroke-width="0.75"/><ellipse cx="641.1" cy="284.8" rx="2.3" ry="5.1" fill="#c6c6c6" stroke="#939393" stroke-width="0.75"/><ellipse cx="623.9" cy="250.6" rx="2.7" ry="2.3" fill="#c6c6c6" stroke="#939393" stroke-width="0.75"/><ellipse cx="630.4" cy="302.4" rx="2.7" ry="2.1" fill="#c6c6c6" stroke="#939393" stroke-width="0.75"/><ellipse cx="638.5" cy="316.2" rx="2.3" ry="2.3" fill="#c6c6c6" stroke="#939393" stroke-width="0.75"/><ellipse cx="631.4" cy="238.8" rx="3.1" ry="1.8" fill="#c6c6c6" stroke="#939393" stroke-width="0.75"/><ellipse cx="639.9" cy="310.0" rx="2.5" ry="1.8" fill="#c6c6c6" stroke="#939393" stroke-width="0.75"/><ellipse cx="637.3" cy="270.3" rx="2.6" ry="1.7" fill="#c6c6c6" stroke="#939393" stroke-width="0.75"/><ellipse cx="626.5" cy="352.9" rx="2.6" ry="2.3" fill="#c6c6c6" stroke="#939393" stroke-width="0.75"/><ellipse cx="632.0" cy="334.1" rx="2.4" ry="1.9" fill="#c6c6c6" stroke="#939393" stroke-width="0.75"/><ellipse cx="634.6" cy="274.6" rx="3.3" ry="2.2" fill="#c6c6c6" stroke="#939393" stroke-width="0.75"/><ellipse cx="637.6" cy="320.9" rx="3.1" ry="2.1" fill="#c6c6c6" stroke="#939393" stroke-width="0.75"/><ellipse cx="630.3" cy="260.3" rx="2.2" ry="2.4" fill="#c6c6c6" stroke="#939393" stroke-width="0.75"/><ellipse cx="627.6" cy="305.5" rx="2.9" ry="2.1" fill="#c6c6c6" stroke="#939393" stroke-width="0.75"/><ellipse cx="619.2" cy="319.6" rx="2.3" ry="2.6" fill="#c6c6c6" stroke="#939393" stroke-width="0.75"/><ellipse cx="621.2" cy="245.3" rx="2.9" ry="2.4" fill="#c6c6c6" stroke="#939393" stroke-width="0.75"/><ellipse cx="629.2" cy="246.3" rx="2.7" ry="2.0" fill="#c6c6c6" stroke="#939393" stroke-width="0.75"/><ellipse cx="629.3" cy="252.5" rx="2.2" ry="2.5" fill="#c6c6c6" stroke="#939393" stroke-width="0.75"/><ellipse cx="617.9" cy="317.4" rx="3.2" ry="1.9" fill="#c6c6c6" stroke="#939393" stroke-width="0.75"/><ellipse cx="635.6" cy="349.0" rx="2.4" ry="2.1" fill="#c6c6c6" stroke="#939393" stroke-width="0.75"/><ellipse cx="634.2" cy="240.0" rx="2.0" ry="2.3" fill="#c6c6c6" stroke="#939393" stroke-width="0.75"/><ellipse cx="634.2" cy="260.9" rx="2.3" ry="2.0" fill="#c6c6c6" stroke="#939393" stroke-width="0.75"/><ellipse cx="622.1" cy="259.6" rx="2.6" ry="2.3" fill="#c6c6c6" stroke="#939393" stroke-width="0.75"/><ellipse cx="623.4" cy="348.0" rx="2.5" ry="2.5" fill="#c6c6c6" stroke="#939393" stroke-width="0.75"/><ellipse cx="620.4" cy="294.7" rx="2.1" ry="2.4" fill="#c6c6c6" stroke="#939393" stroke-width="0.75"/><ellipse cx="634.5" cy="330.3" rx="3.1" ry="1.8" fill="#c6c6c6" stroke="#939393" stroke-width="0.75"/><ellipse cx="621.2" cy="302.0" rx="2.9" ry="1.7" fill="#c6c6c6" stroke="#939393" stroke-width="0.75"/><ellipse cx="625.8" cy="295.6" rx="2.7" ry="5.5" fill="#c6c6c6" stroke="#939393" stroke-width="0.75"/><ellipse cx="630.3" cy="225.8" rx="2.1" ry="1.8" fill="#c6c6c6" stroke="#939393" stroke-width="0.75"/><ellipse cx="618.3" cy="250.1" rx="3.1" ry="2.0" fill="#c6c6c6" stroke="#939393" stroke-width="0.75"/><ellipse cx="636.5" cy="263.6" rx="3.3" ry="2.4" fill="#c6c6c6" stroke="#939393" stroke-width="0.75"/><ellipse cx="627.9" cy="320.1" rx="3.2" ry="2.2" fill="#c6c6c6" stroke="#939393" stroke-width="0.75"/><ellipse cx="635.3" cy="317.0" rx="2.9" ry="2.5" fill="#c6c6c6" stroke="#939393" stroke-width="0.75"/><ellipse cx="626.3" cy="253.0" rx="3.2" ry="1.9" fill="#c6c6c6" stroke="#939393" stroke-width="0.75"/><ellipse cx="625.2" cy="281.0" rx="2.7" ry="2.4" fill="#c6c6c6" stroke="#939393" stroke-width="0.75"/><ellipse cx="636.5" cy="306.7" rx="3.2" ry="2.2" fill="#c6c6c6" stroke="#939393" stroke-width="0.75"/><ellipse cx="634.6" cy="345.1" rx="2.3" ry="1.8" fill="#c6c6c6" stroke="#939393" stroke-width="0.75"/><ellipse cx="620.7" cy="344.5" rx="2.1" ry="2.1" fill="#c6c6c6" stroke="#939393" stroke-width="0.75"/><ellipse cx="638.0" cy="324.3" rx="2.7" ry="2.1" fill="#c6c6c6" stroke="#939393" stroke-width="0.75"/><ellipse cx="620.6" cy="253.3" rx="3.2" ry="1.7" fill="#c6c6c6" stroke="#939393" stroke-width="0.75"/><ellipse cx="631.3" cy="231.5" rx="2.7" ry="2.2" fill="#c6c6c6" stroke="#939393" stroke-width="0.75"/><ellipse cx="617.6" cy="282.1" rx="3.2" ry="2.0" fill="#c6c6c6" stroke="#939393" stroke-width="0.75"/><ellipse cx="635.1" cy="310.1" rx="3.3" ry="1.8" fill="#c6c6c6" stroke="#939393" stroke-width="0.75"/><ellipse cx="620.4" cy="299.5" rx="2.9" ry="1.7" fill="#c6c6c6" stroke="#939393" stroke-width="0.75"/><ellipse cx="623.0" cy="341.6" rx="3.0" ry="2.5" fill="#c6c6c6" stroke="#939393" stroke-width="0.75"/><ellipse cx="626.1" cy="344.7" rx="3.4" ry="2.2" fill="#c6c6c6" stroke="#939393" stroke-width="0.75"/><ellipse cx="633.2" cy="347.7" rx="3.3" ry="1.7" fill="#c6c6c6" stroke="#939393" stroke-width="0.75"/><ellipse cx="639.1" cy="295.9" rx="2.9" ry="2.0" fill="#c6c6c6" stroke="#939393" stroke-width="0.75"/><ellipse cx="625.4" cy="316.5" rx="2.5" ry="2.1" fill="#c6c6c6" stroke="#939393" stroke-width="0.75"/><ellipse cx="617.9" cy="288.0" rx="3.1" ry="1.9" fill="#c6c6c6" stroke="#939393" stroke-width="0.75"/><ellipse cx="627.2" cy="354.8" rx="2.6" ry="2.2" fill="#c6c6c6" stroke="#939393" stroke-width="0.75"/><ellipse cx="628.5" cy="326.5" rx="2.4" ry="2.4" fill="#c6c6c6" stroke="#939393" stroke-width="0.75"/><ellipse cx="619.0" cy="243.1" rx="2.7" ry="1.9" fill="#c6c6c6" stroke="#939393" stroke-width="0.75"/><ellipse cx="626.3" cy="259.8" rx="3.4" ry="2.3" fill="#c6c6c6" stroke="#939393" stroke-width="0.75"/><ellipse cx="629.3" cy="324.6" rx="2.5" ry="2.0" fill="#c6c6c6" stroke="#939393" stroke-width="0.75"/><ellipse cx="626.6" cy="287.9" rx="2.8" ry="2.3" fill="#c6c6c6" stroke="#939393" stroke-width="0.75"/><ellipse cx="633.8" cy="288.8" rx="2.1" ry="2.4" fill="#c6c6c6" stroke="#939393" stroke-width="0.75"/><ellipse cx="636.8" cy="227.9" rx="2.8" ry="1.7" fill="#c6c6c6" stroke="#939393" stroke-width="0.75"/><ellipse cx="642.0" cy="291.9" rx="2.0" ry="1.9" fill="#c6c6c6" stroke="#939393" stroke-width="0.75"/><ellipse cx="626.9" cy="293.1" rx="2.9" ry="2.3" fill="#c6c6c6" stroke="#939393" stroke-width="0.75"/><ellipse cx="629.6" cy="281.4" rx="3.3" ry="2.3" fill="#c6c6c6" stroke="#939393" stroke-width="0.75"/><ellipse cx="633.8" cy="281.0" rx="2.9" ry="2.3" fill="#c6c6c6" stroke="#939393" stroke-width="0.75"/><ellipse cx="631.3" cy="284.0" rx="3.0" ry="1.9" fill="#c6c6c6" stroke="#939393" stroke-width="0.75"/><ellipse cx="632.7" cy="235.8" rx="2.6" ry="2.4" fill="#c6c6c6" stroke="#939393" stroke-width="0.75"/><ellipse cx="624.7" cy="228.0" rx="1.8" ry="3.6" fill="#c6c6c6" stroke="#939393" stroke-width="0.75"/><ellipse cx="637.8" cy="292.7" rx="3.3" ry="2.3" fill="#c6c6c6" stroke="#939393" stroke-width="0.75"/><ellipse cx="623.4" cy="298.2" rx="3.2" ry="2.4" fill="#c6c6c6" stroke="#939393" stroke-width="0.75"/><ellipse cx="637.7" cy="284.5" rx="2.4" ry="2.0" fill="#c6c6c6" stroke="#939393" stroke-width="0.75"/><ellipse cx="632.2" cy="298.2" rx="2.4" ry="2.1" fill="#c6c6c6" stroke="#939393" stroke-width="0.75"/><ellipse cx="637.5" cy="333.8" rx="3.3" ry="1.7" fill="#c6c6c6" stroke="#939393" stroke-width="0.75"/><ellipse cx="621.8" cy="351.5" rx="2.1" ry="1.8" fill="#c6c6c6" stroke="#939393" stroke-width="0.75"/><ellipse cx="635.3" cy="301.9" rx="2.8" ry="2.5" fill="#c6c6c6" stroke="#939393" stroke-width="0.75"/><ellipse cx="631.5" cy="328.1" rx="2.0" ry="2.0" fill="#c6c6c6" stroke="#939393" stroke-width="0.75"/><ellipse cx="618.0" cy="235.0" rx="3.3" ry="2.6" fill="#c6c6c6" stroke="#939393" stroke-width="0.75"/><ellipse cx="632.7" cy="320.9" rx="2.6" ry="1.8" fill="#c6c6c6" stroke="#939393" stroke-width="0.75"/><ellipse cx="618.7" cy="229.3" rx="2.3" ry="1.8" fill="#c6c6c6" stroke="#939393" stroke-width="0.75"/><ellipse cx="636.6" cy="236.3" rx="1.6" ry="5.6" fill="#c6c6c6" stroke="#939393" stroke-width="0.75"/><ellipse cx="622.1" cy="323.8" rx="3.4" ry="1.8" fill="#c6c6c6" stroke="#939393" stroke-width="0.75"/><ellipse cx="619.5" cy="277.4" rx="2.2" ry="1.7" fill="#c6c6c6" stroke="#939393" stroke-width="0.75"/><ellipse cx="630.5" cy="331.6" rx="2.3" ry="2.4" fill="#c6c6c6" stroke="#939393" stroke-width="0.75"/><ellipse cx="629.1" cy="277.3" rx="2.1" ry="2.4" fill="#c6c6c6" stroke="#939393" stroke-width="0.75"/><ellipse cx="637.9" cy="344.0" rx="3.2" ry="2.4" fill="#c6c6c6" stroke="#939393" stroke-width="0.75"/><ellipse cx="619.0" cy="263.7" rx="2.4" ry="5.6" fill="#c6c6c6" stroke="#939393" stroke-width="0.75"/><ellipse cx="628.9" cy="243.1" rx="3.3" ry="1.9" fill="#c6c6c6" stroke="#939393" stroke-width="0.75"/><ellipse cx="631.3" cy="292.5" rx="3.0" ry="1.7" fill="#c6c6c6" stroke="#939393" stroke-width="0.75"/><ellipse cx="619.7" cy="257.6" rx="2.4" ry="6.0" fill="#c6c6c6" stroke="#939393" stroke-width="0.75"/><ellipse cx="637.4" cy="299.7" rx="2.0" ry="5.7" fill="#c6c6c6" stroke="#939393" stroke-width="0.75"/><ellipse cx="623.4" cy="279.0" rx="3.2" ry="2.1" fill="#c6c6c6" stroke="#939393" stroke-width="0.75"/><ellipse cx="636.6" cy="242.5" rx="2.0" ry="5.2" fill="#c6c6c6" stroke="#939393" stroke-width="0.75"/><ellipse cx="620.3" cy="288.8" rx="2.9" ry="1.8" fill="#c6c6c6" stroke="#939393" stroke-width="0.75"/><ellipse cx="637.9" cy="342.1" rx="2.5" ry="2.3" fill="#c6c6c6" stroke="#939393" stroke-width="0.75"/><ellipse cx="619.9" cy="326.3" rx="2.6" ry="2.0" fill="#c6c6c6" stroke="#939393" stroke-width="0.75"/><ellipse cx="627.8" cy="229.2" rx="3.3" ry="2.4" fill="#c6c6c6" stroke="#939393" stroke-width="0.75"/><ellipse cx="629.1" cy="341.0" rx="2.4" ry="1.8" fill="#c6c6c6" stroke="#939393" stroke-width="0.75"/><ellipse cx="626.9" cy="314.1" rx="3.0" ry="2.4" fill="#c6c6c6" stroke="#939393" stroke-width="0.75"/><ellipse cx="624.2" cy="305.5" rx="2.8" ry="2.6" fill="#c6c6c6" stroke="#939393" stroke-width="0.75"/><ellipse cx="642.2" cy="288.8" rx="2.8" ry="2.0" fill="#c6c6c6" stroke="#939393" stroke-width="0.75"/><ellipse cx="619.9" cy="271.8" rx="3.2" ry="2.0" fill="#c6c6c6" stroke="#939393" stroke-width="0.75"/><ellipse cx="642.7" cy="280.6" rx="2.8" ry="2.5" fill="#c6c6c6" stroke="#939393" stroke-width="0.75"/><ellipse cx="622.5" cy="291.8" rx="2.4" ry="1.7" fill="#c6c6c6" stroke="#939393" stroke-width="0.75"/><ellipse cx="638.9" cy="260.7" rx="2.6" ry="2.2" fill="#c6c6c6" stroke="#939393" stroke-width="0.75"/><ellipse cx="638.5" cy="282.3" rx="3.2" ry="1.7" fill="#c6c6c6" stroke="#939393" stroke-width="0.75"/><ellipse cx="624.8" cy="256.8" rx="3.1" ry="2.5" fill="#c6c6c6" stroke="#939393" stroke-width="0.75"/><ellipse cx="623.5" cy="264.5" rx="2.4" ry="2.5" fill="#c6c6c6" stroke="#939393" stroke-width="0.75"/><ellipse cx="638.1" cy="267.9" rx="3.0" ry="2.5" fill="#c6c6c6" stroke="#939393" stroke-width="0.75"/><ellipse cx="622.9" cy="334.1" rx="2.1" ry="2.2" fill="#c6c6c6" stroke="#939393" stroke-width="0.75"/><ellipse cx="637.7" cy="257.0" rx="2.3" ry="2.4" fill="#c6c6c6" stroke="#939393" stroke-width="0.75"/><ellipse cx="635.4" cy="224.4" rx="2.3" ry="2.2" fill="#c6c6c6" stroke="#939393" stroke-width="0.75"/><ellipse cx="629.1" cy="352.6" rx="2.7" ry="1.9" fill="#c6c6c6" stroke="#939393" stroke-width="0.75"/><ellipse cx="624.6" cy="239.4" rx="3.1" ry="2.4" fill="#c6c6c6" stroke="#939393" stroke-width="0.75"/><ellipse cx="617.6" cy="267.8" rx="2.1" ry="2.4" fill="#c6c6c6" stroke="#939393" stroke-width="0.75"/><ellipse cx="631.5" cy="277.9" rx="2.3" ry="2.2" fill="#c6c6c6" stroke="#939393" stroke-width="0.75"/><ellipse cx="636.3" cy="327.9" rx="3.2" ry="2.2" fill="#c6c6c6" stroke="#939393" stroke-width="0.75"/><ellipse cx="636.0" cy="314.1" rx="2.8" ry="1.9" fill="#c6c6c6" stroke="#939393" stroke-width="0.75"/><ellipse cx="635.5" cy="338.3" rx="2.3" ry="2.3" fill="#c6c6c6" stroke="#939393" stroke-width="0.75"/><ellipse cx="622.4" cy="321.2" rx="2.8" ry="2.1" fill="#c6c6c6" stroke="#939393" stroke-width="0.75"/><ellipse cx="625.5" cy="273.8" rx="2.2" ry="1.7" fill="#c6c6c6" stroke="#939393" stroke-width="0.75"/><ellipse cx="639.8" cy="233.0" rx="2.5" ry="1.8" fill="#c6c6c6" stroke="#939393" stroke-width="0.75"/><ellipse cx="621.6" cy="274.5" rx="3.1" ry="1.8" fill="#c6c6c6" stroke="#939393" stroke-width="0.75"/><ellipse cx="618.6" cy="284.5" rx="2.5" ry="2.2" fill="#c6c6c6" stroke="#939393" stroke-width="0.75"/><ellipse cx="625.3" cy="247.0" rx="1.6" ry="6.5" fill="#c6c6c6" stroke="#939393" stroke-width="0.75"/><ellipse cx="621.3" cy="232.8" rx="2.7" ry="2.2" fill="#c6c6c6" stroke="#939393" stroke-width="0.75"/><ellipse cx="633.6" cy="268.1" rx="3.1" ry="2.1" fill="#c6c6c6" stroke="#939393" stroke-width="0.75"/><ellipse cx="640.6" cy="271.7" rx="3.1" ry="2.4" fill="#c6c6c6" stroke="#939393" stroke-width="0.75"/><ellipse cx="622.5" cy="242.2" rx="2.4" ry="1.7" fill="#c6c6c6" stroke="#939393" stroke-width="0.75"/><ellipse cx="626.3" cy="267.6" rx="2.3" ry="1.8" fill="#c6c6c6" stroke="#939393" stroke-width="0.75"/><ellipse cx="627.1" cy="348.1" rx="2.3" ry="6.1" fill="#c6c6c6" stroke="#939393" stroke-width="0.75"/><ellipse cx="624.9" cy="301.8" rx="3.3" ry="2.5" fill="#c6c6c6" stroke="#939393" stroke-width="0.75"/><ellipse cx="620.8" cy="239.9" rx="2.3" ry="4.7" fill="#c6c6c6" stroke="#939393" stroke-width="0.75"/><ellipse cx="619.4" cy="307.0" rx="2.8" ry="4.3" fill="#c6c6c6" stroke="#939393" stroke-width="0.75"/><ellipse cx="628.6" cy="299.9" rx="2.9" ry="2.6" fill="#c6c6c6" stroke="#939393" stroke-width="0.75"/><ellipse cx="639.7" cy="288.9" rx="2.6" ry="2.1" fill="#c6c6c6" stroke="#939393" stroke-width="0.75"/><ellipse cx="625.5" cy="225.6" rx="3.4" ry="2.6" fill="#c6c6c6" stroke="#939393" stroke-width="0.75"/><ellipse cx="630.1" cy="317.4" rx="2.1" ry="1.9" fill="#c6c6c6" stroke="#939393" stroke-width="0.75"/><ellipse cx="631.6" cy="305.3" rx="3.3" ry="2.5" fill="#c6c6c6" stroke="#939393" stroke-width="0.75"/><ellipse cx="635.4" cy="232.6" rx="2.1" ry="2.4" fill="#c6c6c6" stroke="#939393" stroke-width="0.75"/><ellipse cx="628.3" cy="333.9" rx="2.9" ry="2.6" fill="#c6c6c6" stroke="#939393" stroke-width="0.75"/><ellipse cx="637.7" cy="277.5" rx="1.8" ry="5.8" fill="#c6c6c6" stroke="#939393" stroke-width="0.75"/><ellipse cx="628.5" cy="236.7" rx="2.9" ry="2.0" fill="#c6c6c6" stroke="#939393" stroke-width="0.75"/><ellipse cx="620.9" cy="281.1" rx="3.1" ry="1.8" fill="#c6c6c6" stroke="#939393" stroke-width="0.75"/><ellipse cx="623.5" cy="313.3" rx="2.4" ry="1.8" fill="#c6c6c6" stroke="#939393" stroke-width="0.75"/><ellipse cx="617.6" cy="260.0" rx="2.2" ry="1.9" fill="#c6c6c6" stroke="#939393" stroke-width="0.75"/><ellipse cx="625.2" cy="330.4" rx="2.9" ry="1.7" fill="#c6c6c6" stroke="#939393" stroke-width="0.75"/><ellipse cx="630.0" cy="296.2" rx="2.3" ry="1.7" fill="#c6c6c6" stroke="#939393" stroke-width="0.75"/><ellipse cx="622.5" cy="354.5" rx="2.3" ry="2.5" fill="#c6c6c6" stroke="#939393" stroke-width="0.75"/><ellipse cx="629.6" cy="337.9" rx="3.2" ry="1.8" fill="#c6c6c6" stroke="#939393" stroke-width="0.75"/><ellipse cx="619.5" cy="312.6" rx="2.1" ry="2.5" fill="#c6c6c6" stroke="#939393" stroke-width="0.75"/><ellipse cx="626.3" cy="338.6" rx="2.9" ry="2.1" fill="#c6c6c6" stroke="#939393" stroke-width="0.75"/><ellipse cx="622.2" cy="331.0" rx="3.2" ry="2.1" fill="#c6c6c6" stroke="#939393" stroke-width="0.75"/><ellipse cx="631.6" cy="312.9" rx="2.2" ry="1.9" fill="#c6c6c6" stroke="#939393" stroke-width="0.75"/><ellipse cx="652.8" cy="252.3" rx="2.4" ry="1.8" fill="#c6c6c6" stroke="#939393" stroke-width="0.75"/><ellipse cx="706.3" cy="245.4" rx="2.2" ry="1.9" fill="#c6c6c6" stroke="#939393" stroke-width="0.75"/><ellipse cx="667.8" cy="256.0" rx="2.5" ry="1.9" fill="#c6c6c6" stroke="#939393" stroke-width="0.75"/><ellipse cx="683.6" cy="259.1" rx="2.1" ry="1.9" fill="#c6c6c6" stroke="#939393" stroke-width="0.75"/><ellipse cx="686.1" cy="242.0" rx="2.5" ry="2.2" fill="#c6c6c6" stroke="#939393" stroke-width="0.75"/><ellipse cx="669.7" cy="249.5" rx="3.5" ry="2.4" fill="#c6c6c6" stroke="#939393" stroke-width="0.75"/><ellipse cx="690.1" cy="220.9" rx="2.4" ry="1.8" fill="#c6c6c6" stroke="#939393" stroke-width="0.75"/><ellipse cx="730.9" cy="255.5" rx="1.7" ry="5.9" fill="#c6c6c6" stroke="#939393" stroke-width="0.75"/><ellipse cx="684.2" cy="295.2" rx="2.3" ry="2.4" fill="#c6c6c6" stroke="#939393" stroke-width="0.75"/><ellipse cx="734.3" cy="249.5" rx="1.8" ry="6.0" fill="#c6c6c6" stroke="#939393" stroke-width="0.75"/><ellipse cx="648.2" cy="260.6" rx="2.7" ry="2.3" fill="#c6c6c6" stroke="#939393" stroke-width="0.75"/><ellipse cx="652.0" cy="256.0" rx="2.3" ry="3.9" fill="#c6c6c6" stroke="#939393" stroke-width="0.75"/><ellipse cx="725.6" cy="242.4" rx="2.3" ry="1.9" fill="#c6c6c6" stroke="#939393" stroke-width="0.75"/><ellipse cx="693.9" cy="281.6" rx="2.8" ry="2.4" fill="#c6c6c6" stroke="#939393" stroke-width="0.75"/><ellipse cx="687.8" cy="296.0" rx="2.1" ry="2.0" fill="#c6c6c6" stroke="#939393" stroke-width="0.75"/><ellipse cx="674.3" cy="285.5" rx="1.9" ry="5.8" fill="#c6c6c6" stroke="#939393" stroke-width="0.75"/><ellipse cx="655.4" cy="298.1" rx="2.0" ry="3.8" fill="#c6c6c6" stroke="#939393" stroke-width="0.75"/><ellipse cx="736.0" cy="273.9" rx="2.9" ry="1.9" fill="#c6c6c6" stroke="#939393" stroke-width="0.75"/><ellipse cx="667.1" cy="225.3" rx="3.5" ry="2.4" fill="#c6c6c6" stroke="#939393" stroke-width="0.75"/><ellipse cx="716.9" cy="278.0" rx="2.5" ry="3.9" fill="#c6c6c6" stroke="#939393" stroke-width="0.75"/><ellipse cx="648.9" cy="288.2" rx="2.3" ry="2.4" fill="#c6c6c6" stroke="#939393" stroke-width="0.75"/><ellipse cx="699.4" cy="270.2" rx="2.3" ry="2.5" fill="#c6c6c6" stroke="#939393" stroke-width="0.75"/><ellipse cx="680.3" cy="239.6" rx="3.1" ry="1.8" fill="#c6c6c6" stroke="#939393" stroke-width="0.75"/><ellipse cx="646.4" cy="243.0" rx="2.7" ry="3.6" fill="#c6c6c6" stroke="#939393" stroke-width="0.75"/><ellipse cx="727.0" cy="256.9" rx="2.5" ry="1.8" fill="#c6c6c6" stroke="#939393" stroke-width="0.75"/><ellipse cx="678.5" cy="221.5" rx="2.1" ry="2.5" fill="#c6c6c6" stroke="#939393" stroke-width="0.75"/><ellipse cx="691.1" cy="284.3" rx="2.0" ry="4.7" fill="#c6c6c6" stroke="#939393" stroke-width="0.75"/><ellipse cx="712.1" cy="249.0" rx="3.6" ry="2.2" fill="#c6c6c6" stroke="#939393" stroke-width="0.75"/><ellipse cx="668.6" cy="290.7" rx="2.8" ry="2.4" fill="#c6c6c6" stroke="#939393" stroke-width="0.75"/><ellipse cx="700.5" cy="285.4" rx="2.4" ry="2.3" fill="#c6c6c6" stroke="#939393" stroke-width="0.75"/><ellipse cx="713.6" cy="276.8" rx="2.1" ry="2.1" fill="#c6c6c6" stroke="#939393" stroke-width="0.75"/><ellipse cx="692.1" cy="266.0" rx="3.1" ry="1.8" fill="#c6c6c6" stroke="#939393" stroke-width="0.75"/><ellipse cx="653.2" cy="245.2" rx="3.0" ry="2.5" fill="#c6c6c6" stroke="#939393" stroke-width="0.75"/><ellipse cx="721.1" cy="263.2" rx="3.2" ry="2.2" fill="#c6c6c6" stroke="#939393" stroke-width="0.75"/><ellipse cx="667.7" cy="277.0" rx="3.0" ry="1.8" fill="#c6c6c6" stroke="#939393" stroke-width="0.75"/><ellipse cx="663.8" cy="234.5" rx="3.3" ry="2.4" fill="#c6c6c6" stroke="#939393" stroke-width="0.75"/><ellipse cx="647.1" cy="292.4" rx="2.4" ry="2.2" fill="#c6c6c6" stroke="#939393" stroke-width="0.75"/><ellipse cx="694.0" cy="260.4" rx="3.4" ry="2.2" fill="#c6c6c6" stroke="#939393" stroke-width="0.75"/><ellipse cx="737.8" cy="246.1" rx="3.4" ry="1.7" fill="#c6c6c6" stroke="#939393" stroke-width="0.75"/><ellipse cx="689.8" cy="229.0" rx="2.6" ry="2.3" fill="#c6c6c6" stroke="#939393" stroke-width="0.75"/><ellipse cx="659.0" cy="270.9" rx="2.5" ry="2.0" fill="#c6c6c6" stroke="#939393" stroke-width="0.75"/><ellipse cx="714.8" cy="260.8" rx="2.4" ry="2.3" fill="#c6c6c6" stroke="#939393" stroke-width="0.75"/><ellipse cx="659.3" cy="299.2" rx="3.1" ry="2.5" fill="#c6c6c6" stroke="#939393" stroke-width="0.75"/><ellipse cx="713.7" cy="243.2" rx="2.5" ry="2.0" fill="#c6c6c6" stroke="#939393" stroke-width="0.75"/><ellipse cx="712.2" cy="257.1" rx="3.5" ry="2.5" fill="#c6c6c6" stroke="#939393" stroke-width="0.75"/><ellipse cx="656.8" cy="306.4" rx="2.7" ry="2.0" fill="#c6c6c6" stroke="#939393" stroke-width="0.75"/><ellipse cx="658.5" cy="280.4" rx="2.3" ry="3.7" fill="#c6c6c6" stroke="#939393" stroke-width="0.75"/><ellipse cx="674.2" cy="267.8" rx="2.7" ry="1.7" fill="#c6c6c6" stroke="#939393" stroke-width="0.75"/><ellipse cx="683.0" cy="280.7" rx="3.6" ry="1.9" fill="#c6c6c6" stroke="#939393" stroke-width="0.75"/><ellipse cx="672.1" cy="270.4" rx="2.7" ry="2.2" fill="#c6c6c6" stroke="#939393" stroke-width="0.75"/><ellipse cx="666.3" cy="296.1" rx="2.3" ry="2.3" fill="#c6c6c6" stroke="#939393" stroke-width="0.75"/><ellipse cx="681.3" cy="221.2" rx="3.4" ry="2.1" fill="#c6c6c6" stroke="#939393" stroke-width="0.75"/><ellipse cx="663.3" cy="242.4" rx="2.2" ry="1.9" fill="#c6c6c6" stroke="#939393" stroke-width="0.75"/><ellipse cx="696.4" cy="260.3" rx="3.3" ry="2.5" fill="#c6c6c6" stroke="#939393" stroke-width="0.75"/><ellipse cx="721.4" cy="283.7" rx="2.5" ry="2.0" fill="#c6c6c6" stroke="#939393" stroke-width="0.75"/><ellipse cx="700.1" cy="291.3" rx="3.3" ry="2.2" fill="#c6c6c6" stroke="#939393" stroke-width="0.75"/><ellipse cx="706.5" cy="267.7" rx="3.5" ry="2.1" fill="#c6c6c6" stroke="#939393" stroke-width="0.75"/><ellipse cx="673.5" cy="291.3" rx="2.6" ry="3.8" fill="#c6c6c6" stroke="#939393" stroke-width="0.75"/><ellipse cx="693.2" cy="238.8" rx="2.9" ry="2.3" fill="#c6c6c6" stroke="#939393" stroke-width="0.75"/><ellipse cx="704.6" cy="277.2" rx="3.1" ry="2.6" fill="#c6c6c6" stroke="#939393" stroke-width="0.75"/><ellipse cx="680.8" cy="271.2" rx="3.2" ry="2.3" fill="#c6c6c6" stroke="#939393" stroke-width="0.75"/><ellipse cx="650.5" cy="291.3" rx="2.5" ry="4.3" fill="#c6c6c6" stroke="#939393" stroke-width="0.75"/><ellipse cx="704.2" cy="234.3" rx="2.8" ry="2.0" fill="#c6c6c6" stroke="#939393" stroke-width="0.75"/><ellipse cx="727.8" cy="266.7" rx="2.5" ry="2.0" fill="#c6c6c6" stroke="#939393" stroke-width="0.75"/><ellipse cx="694.7" cy="285.2" rx="3.1" ry="2.5" fill="#c6c6c6" stroke="#939393" stroke-width="0.75"/><ellipse cx="646.9" cy="264.4" rx="2.1" ry="2.3" fill="#c6c6c6" stroke="#939393" stroke-width="0.75"/><ellipse cx="729.9" cy="262.8" rx="3.1" ry="1.7" fill="#c6c6c6" stroke="#939393" stroke-width="0.75"/><ellipse cx="682.0" cy="242.7" rx="3.4" ry="1.8" fill="#c6c6c6" stroke="#939393" stroke-width="0.75"/><ellipse cx="688.6" cy="230.8" rx="2.5" ry="2.2" fill="#c6c6c6" stroke="#939393" stroke-width="0.75"/><ellipse cx="735.8" cy="271.2" rx="2.3" ry="4.9" fill="#c6c6c6" stroke="#939393" stroke-width="0.75"/><ellipse cx="667.0" cy="280.8" rx="2.8" ry="1.7" fill="#c6c6c6" stroke="#939393" stroke-width="0.75"/><ellipse cx="704.6" cy="262.8" rx="2.4" ry="1.9" fill="#c6c6c6" stroke="#939393" stroke-width="0.75"/><ellipse cx="697.6" cy="246.2" rx="2.8" ry="2.6" fill="#c6c6c6" stroke="#939393" stroke-width="0.75"/><ellipse cx="697.4" cy="288.9" rx="2.3" ry="6.4" fill="#c6c6c6" stroke="#939393" stroke-width="0.75"/><ellipse cx="667.9" cy="263.9" rx="2.4" ry="2.4" fill="#c6c6c6" stroke="#939393" stroke-width="0.75"/><ellipse cx="668.9" cy="236.0" rx="2.3" ry="4.7" fill="#c6c6c6" stroke="#939393" stroke-width="0.75"/><ellipse cx="698.5" cy="238.9" rx="2.7" ry="5.4" fill="#c6c6c6" stroke="#939393" stroke-width="0.75"/><ellipse cx="731.8" cy="245.9" rx="3.6" ry="2.0" fill="#c6c6c6" stroke="#939393" stroke-width="0.75"/><ellipse cx="670.6" cy="288.9" rx="2.5" ry="2.5" fill="#c6c6c6" stroke="#939393" stroke-width="0.75"/><ellipse cx="666.7" cy="289.0" rx="2.1" ry="2.2" fill="#c6c6c6" stroke="#939393" stroke-width="0.75"/><ellipse cx="731.6" cy="273.8" rx="2.3" ry="2.4" fill="#c6c6c6" stroke="#939393" stroke-width="0.75"/><ellipse cx="659.3" cy="227.6" rx="2.0" ry="5.1" fill="#c6c6c6" stroke="#939393" stroke-width="0.75"/><ellipse cx="661.5" cy="224.9" rx="3.5" ry="2.2" fill="#c6c6c6" stroke="#939393" stroke-width="0.75"/><ellipse cx="740.2" cy="277.9" rx="3.2" ry="2.0" fill="#c6c6c6" stroke="#939393" stroke-width="0.75"/><ellipse cx="740.5" cy="260.4" rx="2.4" ry="2.5" fill="#c6c6c6" stroke="#939393" stroke-width="0.75"/><ellipse cx="712.8" cy="284.8" rx="3.0" ry="2.5" fill="#c6c6c6" stroke="#939393" stroke-width="0.75"/><ellipse cx="652.0" cy="277.3" rx="3.1" ry="2.0" fill="#c6c6c6" stroke="#939393" stroke-width="0.75"/><ellipse cx="662.2" cy="245.2" rx="3.3" ry="2.1" fill="#c6c6c6" stroke="#939393" stroke-width="0.75"/><ellipse cx="703.6" cy="256.2" rx="2.7" ry="5.4" fill="#c6c6c6" stroke="#939393" stroke-width="0.75"/><ellipse cx="662.6" cy="295.7" rx="2.7" ry="1.8" fill="#c6c6c6" stroke="#939393" stroke-width="0.75"/><ellipse cx="737.1" cy="252.4" rx="2.1" ry="2.0" fill="#c6c6c6" stroke="#939393" stroke-width="0.75"/><ellipse cx="660.5" cy="305.5" rx="3.1" ry="2.5" fill="#c6c6c6" stroke="#939393" stroke-width="0.75"/><ellipse cx="683.3" cy="239.5" rx="2.1" ry="2.1" fill="#c6c6c6" stroke="#939393" stroke-width="0.75"/><ellipse cx="708.8" cy="256.8" rx="2.6" ry="2.4" fill="#c6c6c6" stroke="#939393" stroke-width="0.75"/><ellipse cx="645.2" cy="225.1" rx="2.2" ry="2.1" fill="#c6c6c6" stroke="#939393" stroke-width="0.75"/><ellipse cx="671.2" cy="245.5" rx="2.2" ry="5.6" fill="#c6c6c6" stroke="#939393" stroke-width="0.75"/><ellipse cx="649.2" cy="280.3" rx="3.0" ry="2.0" fill="#c6c6c6" stroke="#939393" stroke-width="0.75"/><ellipse cx="645.1" cy="246.5" rx="3.4" ry="2.5" fill="#c6c6c6" stroke="#939393" stroke-width="0.75"/><ellipse cx="701.9" cy="273.2" rx="2.3" ry="6.0" fill="#c6c6c6" stroke="#939393" stroke-width="0.75"/><ellipse cx="678.9" cy="252.8" rx="3.1" ry="2.5" fill="#c6c6c6" stroke="#939393" stroke-width="0.75"/><ellipse cx="718.0" cy="262.7" rx="1.8" ry="5.7" fill="#c6c6c6" stroke="#939393" stroke-width="0.75"/><ellipse cx="687.3" cy="249.0" rx="2.2" ry="2.1" fill="#c6c6c6" stroke="#939393" stroke-width="0.75"/><ellipse cx="709.2" cy="271.3" rx="3.3" ry="2.5" fill="#c6c6c6" stroke="#939393" stroke-width="0.75"/><ellipse cx="714.4" cy="253.7" rx="2.8" ry="2.0" fill="#c6c6c6" stroke="#939393" stroke-width="0.75"/><ellipse cx="691.0" cy="292.6" rx="3.1" ry="1.8" fill="#c6c6c6" stroke="#939393" stroke-width="0.75"/><ellipse cx="643.9" cy="239.7" rx="2.7" ry="2.5" fill="#c6c6c6" stroke="#939393" stroke-width="0.75"/><ellipse cx="671.5" cy="252.1" rx="2.3" ry="2.3" fill="#c6c6c6" stroke="#939393" stroke-width="0.75"/><ellipse cx="721.2" cy="269.9" rx="2.1" ry="1.7" fill="#c6c6c6" stroke="#939393" stroke-width="0.75"/><ellipse cx="670.0" cy="298.1" rx="2.4" ry="2.1" fill="#c6c6c6" stroke="#939393" stroke-width="0.75"/><ellipse cx="709.6" cy="274.1" rx="3.2" ry="2.4" fill="#c6c6c6" stroke="#939393" stroke-width="0.75"/><ellipse cx="663.4" cy="227.7" rx="3.4" ry="1.8" fill="#c6c6c6" stroke="#939393" stroke-width="0.75"/><ellipse cx="723.0" cy="267.6" rx="3.4" ry="1.9" fill="#c6c6c6" stroke="#939393" stroke-width="0.75"/><ellipse cx="724.6" cy="260.2" rx="1.9" ry="3.6" fill="#c6c6c6" stroke="#939393" stroke-width="0.75"/><ellipse cx="702.1" cy="232.4" rx="3.5" ry="2.0" fill="#c6c6c6" stroke="#939393" stroke-width="0.75"/><ellipse cx="653.0" cy="309.5" rx="3.0" ry="2.5" fill="#c6c6c6" stroke="#939393" stroke-width="0.75"/><ellipse cx="737.0" cy="260.8" rx="3.4" ry="2.3" fill="#c6c6c6" stroke="#939393" stroke-width="0.75"/><ellipse cx="679.6" cy="225.2" rx="3.0" ry="2.2" fill="#c6c6c6" stroke="#939393" stroke-width="0.75"/><ellipse cx="689.1" cy="244.8" rx="3.4" ry="2.0" fill="#c6c6c6" stroke="#939393" stroke-width="0.75"/><ellipse cx="678.8" cy="242.4" rx="2.9" ry="2.5" fill="#c6c6c6" stroke="#939393" stroke-width="0.75"/><ellipse cx="675.5" cy="281.4" rx="1.6" ry="5.1" fill="#c6c6c6" stroke="#939393" stroke-width="0.75"/><ellipse cx="687.8" cy="252.6" rx="2.7" ry="4.2" fill="#c6c6c6" stroke="#939393" stroke-width="0.75"/><ellipse cx="724.0" cy="273.2" rx="3.2" ry="2.1" fill="#c6c6c6" stroke="#939393" stroke-width="0.75"/><ellipse cx="688.7" cy="274.1" rx="3.6" ry="2.2" fill="#c6c6c6" stroke="#939393" stroke-width="0.75"/><ellipse cx="657.2" cy="259.8" rx="2.1" ry="2.2" fill="#c6c6c6" stroke="#939393" stroke-width="0.75"/><ellipse cx="654.5" cy="294.4" rx="2.8" ry="2.0" fill="#c6c6c6" stroke="#939393" stroke-width="0.75"/><ellipse cx="681.4" cy="299.1" rx="3.5" ry="2.2" fill="#c6c6c6" stroke="#939393" stroke-width="0.75"/><ellipse cx="672.5" cy="255.7" rx="2.9" ry="2.4" fill="#c6c6c6" stroke="#939393" stroke-width="0.75"/><ellipse cx="708.1" cy="249.8" rx="3.6" ry="2.2" fill="#c6c6c6" stroke="#939393" stroke-width="0.75"/><ellipse cx="678.1" cy="256.0" rx="2.4" ry="1.9" fill="#c6c6c6" stroke="#939393" stroke-width="0.75"/><ellipse cx="639.3" cy="224.1" rx="2.4" ry="2.0" fill="#c6c6c6" stroke="#939393" stroke-width="0.75"/><ellipse cx="644.2" cy="231.2" rx="2.4" ry="1.8" fill="#c6c6c6" stroke="#939393" stroke-width="0.75"/><ellipse cx="738.3" cy="263.1" rx="2.1" ry="6.4" fill="#c6c6c6" stroke="#939393" stroke-width="0.75"/><ellipse cx="678.5" cy="299.4" rx="3.1" ry="2.5" fill="#c6c6c6" stroke="#939393" stroke-width="0.75"/><ellipse cx="680.9" cy="250.2" rx="2.0" ry="5.1" fill="#c6c6c6" stroke="#939393" stroke-width="0.75"/><ellipse cx="676.5" cy="284.7" rx="2.4" ry="2.3" fill="#c6c6c6" stroke="#939393" stroke-width="0.75"/><ellipse cx="680.1" cy="267.2" rx="2.7" ry="2.6" fill="#c6c6c6" stroke="#939393" stroke-width="0.75"/><ellipse cx="675.3" cy="239.4" rx="3.0" ry="1.9" fill="#c6c6c6" stroke="#939393" stroke-width="0.75"/><ellipse cx="652.3" cy="280.3" rx="2.2" ry="1.8" fill="#c6c6c6" stroke="#939393" stroke-width="0.75"/><ellipse cx="738.5" cy="256.0" rx="2.1" ry="2.5" fill="#c6c6c6" stroke="#939393" stroke-width="0.75"/><ellipse cx="696.2" cy="225.5" rx="2.5" ry="5.9" fill="#c6c6c6" stroke="#939393" stroke-width="0.75"/><ellipse cx="707.0" cy="259.5" rx="3.2" ry="1.9" fill="#c6c6c6" stroke="#939393" stroke-width="0.75"/><ellipse cx="701.7" cy="225.5" rx="3.3" ry="2.0" fill="#c6c6c6" stroke="#939393" stroke-width="0.75"/><ellipse cx="649.8" cy="252.6" rx="2.0" ry="2.4" fill="#c6c6c6" stroke="#939393" stroke-width="0.75"/><ellipse cx="643.3" cy="229.1" rx="2.0" ry="2.0" fill="#c6c6c6" stroke="#939393" stroke-width="0.75"/><ellipse cx="703.9" cy="270.8" rx="3.3" ry="2.3" fill="#c6c6c6" stroke="#939393" stroke-width="0.75"/><ellipse cx="671.7" cy="259.5" rx="2.9" ry="2.2" fill="#c6c6c6" stroke="#939393" stroke-width="0.75"/><ellipse cx="680.5" cy="281.9" rx="2.9" ry="2.0" fill="#c6c6c6" stroke="#939393" stroke-width="0.75"/><ellipse cx="654.7" cy="284.9" rx="2.2" ry="2.4" fill="#c6c6c6" stroke="#939393" stroke-width="0.75"/><ellipse cx="651.5" cy="263.5" rx="2.7" ry="1.7" fill="#c6c6c6" stroke="#939393" stroke-width="0.75"/><ellipse cx="663.0" cy="239.4" rx="3.2" ry="2.0" fill="#c6c6c6" stroke="#939393" stroke-width="0.75"/><ellipse cx="696.3" cy="242.7" rx="2.6" ry="2.5" fill="#c6c6c6" stroke="#939393" stroke-width="0.75"/><ellipse cx="719.9" cy="260.4" rx="2.1" ry="2.0" fill="#c6c6c6" stroke="#939393" stroke-width="0.75"/><ellipse cx="720.8" cy="255.6" rx="3.4" ry="2.6" fill="#c6c6c6" stroke="#939393" stroke-width="0.75"/><ellipse cx="642.4" cy="234.8" rx="2.8" ry="1.9" fill="#c6c6c6" stroke="#939393" stroke-width="0.75"/><ellipse cx="660.1" cy="256.1" rx="2.6" ry="2.3" fill="#c6c6c6" stroke="#939393" stroke-width="0.75"/><ellipse cx="658.7" cy="303.1" rx="2.3" ry="2.0" fill="#c6c6c6" stroke="#939393" stroke-width="0.75"/><ellipse cx="673.4" cy="298.0" rx="2.8" ry="2.4" fill="#c6c6c6" stroke="#939393" stroke-width="0.75"/><ellipse cx="685.0" cy="253.5" rx="2.3" ry="2.5" fill="#c6c6c6" stroke="#939393" stroke-width="0.75"/><ellipse cx="700.0" cy="256.7" rx="2.2" ry="1.8" fill="#c6c6c6" stroke="#939393" stroke-width="0.75"/><ellipse cx="674.4" cy="225.2" rx="2.9" ry="1.7" fill="#c6c6c6" stroke="#939393" stroke-width="0.75"/><ellipse cx="667.5" cy="273.1" rx="3.6" ry="1.8" fill="#c6c6c6" stroke="#939393" stroke-width="0.75"/><ellipse cx="649.3" cy="273.6" rx="2.3" ry="2.2" fill="#c6c6c6" stroke="#939393" stroke-width="0.75"/><ellipse cx="695.7" cy="227.3" rx="3.4" ry="2.0" fill="#c6c6c6" stroke="#939393" stroke-width="0.75"/><ellipse cx="653.6" cy="260.4" rx="2.7" ry="2.4" fill="#c6c6c6" stroke="#939393" stroke-width="0.75"/><ellipse cx="688.0" cy="266.5" rx="2.0" ry="1.9" fill="#c6c6c6" stroke="#939393" stroke-width="0.75"/><ellipse cx="656.2" cy="291.9" rx="3.4" ry="1.8" fill="#c6c6c6" stroke="#939393" stroke-width="0.75"/><ellipse cx="657.8" cy="224.3" rx="3.5" ry="2.1" fill="#c6c6c6" stroke="#939393" stroke-width="0.75"/><ellipse cx="682.7" cy="285.3" rx="3.5" ry="2.3" fill="#c6c6c6" stroke="#939393" stroke-width="0.75"/><ellipse cx="651.3" cy="306.1" rx="3.2" ry="2.2" fill="#c6c6c6" stroke="#939393" stroke-width="0.75"/><ellipse cx="650.6" cy="298.2" rx="3.4" ry="1.9" fill="#c6c6c6" stroke="#939393" stroke-width="0.75"/><ellipse cx="705.1" cy="287.4" rx="3.4" ry="2.6" fill="#c6c6c6" stroke="#939393" stroke-width="0.75"/><ellipse cx="691.7" cy="262.7" rx="2.8" ry="2.5" fill="#c6c6c6" stroke="#939393" stroke-width="0.75"/><ellipse cx="694.1" cy="291.8" rx="2.2" ry="2.1" fill="#c6c6c6" stroke="#939393" stroke-width="0.75"/><ellipse cx="656.8" cy="287.7" rx="3.1" ry="2.4" fill="#c6c6c6" stroke="#939393" stroke-width="0.75"/><ellipse cx="654.0" cy="266.1" rx="2.0" ry="2.2" fill="#c6c6c6" stroke="#939393" stroke-width="0.75"/><ellipse cx="736.7" cy="281.0" rx="2.4" ry="2.4" fill="#c6c6c6" stroke="#939393" stroke-width="0.75"/><ellipse cx="691.0" cy="242.0" rx="2.4" ry="2.5" fill="#c6c6c6" stroke="#939393" stroke-width="0.75"/><ellipse cx="700.7" cy="249.4" rx="2.0" ry="2.1" fill="#c6c6c6" stroke="#939393" stroke-width="0.75"/><ellipse cx="671.6" cy="239.3" rx="3.5" ry="2.6" fill="#c6c6c6" stroke="#939393" stroke-width="0.75"/><ellipse cx="687.3" cy="271.1" rx="2.1" ry="2.2" fill="#c6c6c6" stroke="#939393" stroke-width="0.75"/><ellipse cx="678.9" cy="294.2" rx="2.7" ry="1.7" fill="#c6c6c6" stroke="#939393" stroke-width="0.75"/><ellipse cx="725.0" cy="270.1" rx="2.8" ry="2.6" fill="#c6c6c6" stroke="#939393" stroke-width="0.75"/><ellipse cx="664.4" cy="256.0" rx="3.4" ry="1.8" fill="#c6c6c6" stroke="#939393" stroke-width="0.75"/><ellipse cx="707.1" cy="273.5" rx="2.2" ry="5.3" fill="#c6c6c6" stroke="#939393" stroke-width="0.75"/><ellipse cx="671.2" cy="224.1" rx="2.8" ry="2.6" fill="#c6c6c6" stroke="#939393" stroke-width="0.75"/><ellipse cx="723.2" cy="253.1" rx="3.4" ry="1.8" fill="#c6c6c6" stroke="#939393" stroke-width="0.75"/><ellipse cx="664.4" cy="220.8" rx="2.4" ry="3.8" fill="#c6c6c6" stroke="#939393" stroke-width="0.75"/><ellipse cx="657.9" cy="308.6" rx="3.0" ry="2.4" fill="#c6c6c6" stroke="#939393" stroke-width="0.75"/><ellipse cx="655.0" cy="262.6" rx="3.1" ry="2.3" fill="#c6c6c6" stroke="#939393" stroke-width="0.75"/><ellipse cx="658.3" cy="267.9" rx="2.7" ry="2.3" fill="#c6c6c6" stroke="#939393" stroke-width="0.75"/><ellipse cx="651.2" cy="269.8" rx="2.3" ry="1.9" fill="#c6c6c6" stroke="#939393" stroke-width="0.75"/><ellipse cx="664.0" cy="290.7" rx="3.3" ry="1.9" fill="#c6c6c6" stroke="#939393" stroke-width="0.75"/><ellipse cx="709.0" cy="285.0" rx="3.2" ry="2.3" fill="#c6c6c6" stroke="#939393" stroke-width="0.75"/><ellipse cx="729.6" cy="250.3" rx="3.0" ry="1.8" fill="#c6c6c6" stroke="#939393" stroke-width="0.75"/><ellipse cx="653.6" cy="274.9" rx="3.1" ry="1.8" fill="#c6c6c6" stroke="#939393" stroke-width="0.75"/><ellipse cx="665.8" cy="246.1" rx="3.4" ry="2.6" fill="#c6c6c6" stroke="#939393" stroke-width="0.75"/><ellipse cx="692.5" cy="246.5" rx="1.9" ry="4.4" fill="#c6c6c6" stroke="#939393" stroke-width="0.75"/><ellipse cx="659.5" cy="284.1" rx="2.8" ry="2.2" fill="#c6c6c6" stroke="#939393" stroke-width="0.75"/><ellipse cx="670.3" cy="274.4" rx="2.3" ry="1.8" fill="#c6c6c6" stroke="#939393" stroke-width="0.75"/><ellipse cx="733.1" cy="259.8" rx="2.4" ry="5.8" fill="#c6c6c6" stroke="#939393" stroke-width="0.75"/><ellipse cx="674.8" cy="253.6" rx="2.6" ry="2.6" fill="#c6c6c6" stroke="#939393" stroke-width="0.75"/><ellipse cx="648.5" cy="295.2" rx="2.9" ry="1.9" fill="#c6c6c6" stroke="#939393" stroke-width="0.75"/><ellipse cx="729.4" cy="277.6" rx="3.2" ry="1.8" fill="#c6c6c6" stroke="#939393" stroke-width="0.75"/><ellipse cx="701.1" cy="245.8" rx="1.7" ry="5.7" fill="#c6c6c6" stroke="#939393" stroke-width="0.75"/><ellipse cx="665.4" cy="260.6" rx="2.2" ry="2.5" fill="#c6c6c6" stroke="#939393" stroke-width="0.75"/><ellipse cx="691.1" cy="278.3" rx="2.1" ry="2.3" fill="#c6c6c6" stroke="#939393" stroke-width="0.75"/><ellipse cx="658.2" cy="239.0" rx="2.4" ry="1.8" fill="#c6c6c6" stroke="#939393" stroke-width="0.75"/><ellipse cx="675.6" cy="287.2" rx="3.4" ry="1.7" fill="#c6c6c6" stroke="#939393" stroke-width="0.75"/><ellipse cx="674.4" cy="294.2" rx="2.3" ry="1.8" fill="#c6c6c6" stroke="#939393" stroke-width="0.75"/><ellipse cx="649.6" cy="238.1" rx="3.0" ry="2.1" fill="#c6c6c6" stroke="#939393" stroke-width="0.75"/><ellipse cx="711.6" cy="266.3" rx="3.2" ry="2.4" fill="#c6c6c6" stroke="#939393" stroke-width="0.75"/><ellipse cx="652.4" cy="283.7" rx="3.3" ry="1.7" fill="#c6c6c6" stroke="#939393" stroke-width="0.75"/><ellipse cx="731.7" cy="252.9" rx="2.5" ry="2.2" fill="#c6c6c6" stroke="#939393" stroke-width="0.75"/><ellipse cx="694.7" cy="249.6" rx="3.3" ry="1.7" fill="#c6c6c6" stroke="#939393" stroke-width="0.75"/><ellipse cx="722.7" cy="278.0" rx="2.4" ry="2.0" fill="#c6c6c6" stroke="#939393" stroke-width="0.75"/><ellipse cx="711.0" cy="245.9" rx="1.8" ry="3.6" fill="#c6c6c6" stroke="#939393" stroke-width="0.75"/><ellipse cx="701.6" cy="239.4" rx="2.7" ry="2.0" fill="#c6c6c6" stroke="#939393" stroke-width="0.75"/><ellipse cx="703.7" cy="242.1" rx="1.7" ry="4.9" fill="#c6c6c6" stroke="#939393" stroke-width="0.75"/><ellipse cx="708.5" cy="242.5" rx="2.1" ry="2.3" fill="#c6c6c6" stroke="#939393" stroke-width="0.75"/><ellipse cx="714.7" cy="281.8" rx="3.5" ry="2.5" fill="#c6c6c6" stroke="#939393" stroke-width="0.75"/><ellipse cx="647.1" cy="298.1" rx="3.2" ry="2.3" fill="#c6c6c6" stroke="#939393" stroke-width="0.75"/><ellipse cx="677.9" cy="248.9" rx="2.3" ry="2.4" fill="#c6c6c6" stroke="#939393" stroke-width="0.75"/><ellipse cx="677.6" cy="291.8" rx="3.1" ry="2.1" fill="#c6c6c6" stroke="#939393" stroke-width="0.75"/><ellipse cx="646.4" cy="248.7" rx="2.7" ry="5.3" fill="#c6c6c6" stroke="#939393" stroke-width="0.75"/><ellipse cx="656.0" cy="255.6" rx="2.3" ry="2.6" fill="#c6c6c6" stroke="#939393" stroke-width="0.75"/><ellipse cx="661.1" cy="301.6" rx="2.6" ry="2.0" fill="#c6c6c6" stroke="#939393" stroke-width="0.75"/><ellipse cx="715.7" cy="267.6" rx="2.1" ry="2.5" fill="#c6c6c6" stroke="#939393" stroke-width="0.75"/><ellipse cx="709.0" cy="277.9" rx="3.0" ry="2.3" fill="#c6c6c6" stroke="#939393" stroke-width="0.75"/><ellipse cx="701.3" cy="287.6" rx="2.2" ry="1.8" fill="#c6c6c6" stroke="#939393" stroke-width="0.75"/><ellipse cx="687.1" cy="284.8" rx="2.1" ry="3.7" fill="#c6c6c6" stroke="#939393" stroke-width="0.75"/><ellipse cx="717.2" cy="242.2" rx="2.9" ry="1.8" fill="#c6c6c6" stroke="#939393" stroke-width="0.75"/><ellipse cx="679.0" cy="288.2" rx="2.3" ry="5.7" fill="#c6c6c6" stroke="#939393" stroke-width="0.75"/><ellipse cx="661.0" cy="241.3" rx="2.8" ry="2.5" fill="#c6c6c6" stroke="#939393" stroke-width="0.75"/><ellipse cx="709.7" cy="253.3" rx="2.7" ry="2.5" fill="#c6c6c6" stroke="#939393" stroke-width="0.75"/><ellipse cx="673.9" cy="242.4" rx="2.6" ry="2.3" fill="#c6c6c6" stroke="#939393" stroke-width="0.75"/><ellipse cx="727.5" cy="253.6" rx="2.8" ry="6.1" fill="#c6c6c6" stroke="#939393" stroke-width="0.75"/><ellipse cx="694.6" cy="234.7" rx="2.7" ry="2.0" fill="#c6c6c6" stroke="#939393" stroke-width="0.75"/><ellipse cx="659.6" cy="220.5" rx="2.6" ry="2.4" fill="#c6c6c6" stroke="#939393" stroke-width="0.75"/><ellipse cx="656.6" cy="295.1" rx="1.9" ry="4.6" fill="#c6c6c6" stroke="#939393" stroke-width="0.75"/><ellipse cx="699.6" cy="235.0" rx="3.0" ry="2.5" fill="#c6c6c6" stroke="#939393" stroke-width="0.75"/><ellipse cx="657.3" cy="245.9" rx="1.7" ry="5.8" fill="#c6c6c6" stroke="#939393" stroke-width="0.75"/><ellipse cx="734.4" cy="243.3" rx="2.5" ry="1.9" fill="#c6c6c6" stroke="#939393" stroke-width="0.75"/><ellipse cx="683.2" cy="231.6" rx="2.2" ry="6.0" fill="#c6c6c6" stroke="#939393" stroke-width="0.75"/><ellipse cx="733.7" cy="255.7" rx="1.9" ry="3.8" fill="#c6c6c6" stroke="#939393" stroke-width="0.75"/><ellipse cx="705.9" cy="281.0" rx="2.1" ry="2.0" fill="#c6c6c6" stroke="#939393" stroke-width="0.75"/><ellipse cx="648.3" cy="223.9" rx="3.5" ry="2.5" fill="#c6c6c6" stroke="#939393" stroke-width="0.75"/><ellipse cx="670.3" cy="267.0" rx="2.9" ry="1.9" fill="#c6c6c6" stroke="#939393" stroke-width="0.75"/><ellipse cx="669.0" cy="284.6" rx="3.2" ry="2.0" fill="#c6c6c6" stroke="#939393" stroke-width="0.75"/><ellipse cx="663.0" cy="230.9" rx="2.4" ry="6.1" fill="#c6c6c6" stroke="#939393" stroke-width="0.75"/><ellipse cx="687.1" cy="257.2" rx="2.3" ry="2.4" fill="#c6c6c6" stroke="#939393" stroke-width="0.75"/><ellipse cx="698.1" cy="267.6" rx="2.0" ry="2.3" fill="#c6c6c6" stroke="#939393" stroke-width="0.75"/><ellipse cx="674.3" cy="249.2" rx="3.2" ry="2.5" fill="#c6c6c6" stroke="#939393" stroke-width="0.75"/><ellipse cx="681.9" cy="264.3" rx="3.4" ry="1.9" fill="#c6c6c6" stroke="#939393" stroke-width="0.75"/><ellipse cx="709.6" cy="260.8" rx="1.7" ry="4.6" fill="#c6c6c6" stroke="#939393" stroke-width="0.75"/><ellipse cx="685.2" cy="292.5" rx="2.5" ry="2.1" fill="#c6c6c6" stroke="#939393" stroke-width="0.75"/><ellipse cx="728.2" cy="274.2" rx="2.2" ry="2.2" fill="#c6c6c6" stroke="#939393" stroke-width="0.75"/><ellipse cx="657.8" cy="274.3" rx="2.6" ry="2.1" fill="#c6c6c6" stroke="#939393" stroke-width="0.75"/><ellipse cx="689.3" cy="259.3" rx="3.5" ry="2.1" fill="#c6c6c6" stroke="#939393" stroke-width="0.75"/><ellipse cx="724.9" cy="277.7" rx="1.8" ry="4.3" fill="#c6c6c6" stroke="#939393" stroke-width="0.75"/><ellipse cx="669.6" cy="227.3" rx="2.4" ry="2.0" fill="#c6c6c6" stroke="#939393" stroke-width="0.75"/><ellipse cx="676.9" cy="270.9" rx="2.2" ry="5.0" fill="#c6c6c6" stroke="#939393" stroke-width="0.75"/><ellipse cx="691.8" cy="250.0" rx="3.0" ry="2.6" fill="#c6c6c6" stroke="#939393" stroke-width="0.75"/><ellipse cx="710.0" cy="288.5" rx="2.6" ry="1.8" fill="#c6c6c6" stroke="#939393" stroke-width="0.75"/><ellipse cx="719.7" cy="280.2" rx="2.1" ry="2.2" fill="#c6c6c6" stroke="#939393" stroke-width="0.75"/><ellipse cx="653.0" cy="238.5" rx="2.5" ry="1.8" fill="#c6c6c6" stroke="#939393" stroke-width="0.75"/><ellipse cx="685.9" cy="220.7" rx="2.7" ry="2.6" fill="#c6c6c6" stroke="#939393" stroke-width="0.75"/><ellipse cx="692.1" cy="232.7" rx="2.2" ry="2.4" fill="#c6c6c6" stroke="#939393" stroke-width="0.75"/><ellipse cx="705.1" cy="248.8" rx="2.2" ry="2.0" fill="#c6c6c6" stroke="#939393" stroke-width="0.75"/><ellipse cx="659.8" cy="292.0" rx="2.1" ry="2.3" fill="#c6c6c6" stroke="#939393" stroke-width="0.75"/><ellipse cx="687.4" cy="239.3" rx="2.4" ry="2.2" fill="#c6c6c6" stroke="#939393" stroke-width="0.75"/><ellipse cx="690.6" cy="270.0" rx="3.3" ry="2.5" fill="#c6c6c6" stroke="#939393" stroke-width="0.75"/><ellipse cx="712.7" cy="264.0" rx="3.1" ry="1.7" fill="#c6c6c6" stroke="#939393" stroke-width="0.75"/><ellipse cx="680.1" cy="259.0" rx="3.2" ry="2.3" fill="#c6c6c6" stroke="#939393" stroke-width="0.75"/><ellipse cx="691.7" cy="255.7" rx="2.0" ry="4.7" fill="#c6c6c6" stroke="#939393" stroke-width="0.75"/><ellipse cx="683.1" cy="225.3" rx="2.5" ry="1.7" fill="#c6c6c6" stroke="#939393" stroke-width="0.75"/><ellipse cx="647.8" cy="267.9" rx="3.1" ry="2.3" fill="#c6c6c6" stroke="#939393" stroke-width="0.75"/><ellipse cx="654.4" cy="302.6" rx="2.0" ry="2.1" fill="#c6c6c6" stroke="#939393" stroke-width="0.75"/><ellipse cx="738.3" cy="249.4" rx="2.7" ry="2.5" fill="#c6c6c6" stroke="#939393" stroke-width="0.75"/><ellipse cx="674.3" cy="220.3" rx="3.6" ry="2.5" fill="#c6c6c6" stroke="#939393" stroke-width="0.75"/><ellipse cx="647.3" cy="276.7" rx="2.5" ry="1.9" fill="#c6c6c6" stroke="#939393" stroke-width="0.75"/><ellipse cx="668.8" cy="243.2" rx="1.6" ry="4.0" fill="#c6c6c6" stroke="#939393" stroke-width="0.75"/><ellipse cx="680.2" cy="273.7" rx="2.8" ry="1.8" fill="#c6c6c6" stroke="#939393" stroke-width="0.75"/><ellipse cx="735.3" cy="263.3" rx="3.4" ry="2.4" fill="#c6c6c6" stroke="#939393" stroke-width="0.75"/><ellipse cx="740.3" cy="267.1" rx="2.3" ry="2.5" fill="#c6c6c6" stroke="#939393" stroke-width="0.75"/><ellipse cx="641.3" cy="232.3" rx="2.2" ry="4.4" fill="#c6c6c6" stroke="#939393" stroke-width="0.75"/><ellipse cx="678.7" cy="245.7" rx="2.4" ry="2.6" fill="#c6c6c6" stroke="#939393" stroke-width="0.75"/><ellipse cx="730.3" cy="271.4" rx="2.1" ry="1.9" fill="#c6c6c6" stroke="#939393" stroke-width="0.75"/><ellipse cx="723.4" cy="280.5" rx="3.1" ry="2.2" fill="#c6c6c6" stroke="#939393" stroke-width="0.75"/><ellipse cx="732.7" cy="266.7" rx="2.4" ry="2.5" fill="#c6c6c6" stroke="#939393" stroke-width="0.75"/><ellipse cx="702.6" cy="281.4" rx="2.6" ry="5.3" fill="#c6c6c6" stroke="#939393" stroke-width="0.75"/><ellipse cx="695.6" cy="270.5" rx="2.9" ry="2.0" fill="#c6c6c6" stroke="#939393" stroke-width="0.75"/><ellipse cx="687.8" cy="281.0" rx="2.9" ry="1.9" fill="#c6c6c6" stroke="#939393" stroke-width="0.75"/><ellipse cx="666.6" cy="239.3" rx="3.5" ry="2.6" fill="#c6c6c6" stroke="#939393" stroke-width="0.75"/><ellipse cx="652.4" cy="224.9" rx="2.0" ry="5.8" fill="#c6c6c6" stroke="#939393" stroke-width="0.75"/><ellipse cx="692.8" cy="273.2" rx="2.1" ry="3.7" fill="#c6c6c6" stroke="#939393" stroke-width="0.75"/><ellipse cx="685.2" cy="267.3" rx="3.3" ry="1.9" fill="#c6c6c6" stroke="#939393" stroke-width="0.75"/><ellipse cx="686.2" cy="278.3" rx="2.4" ry="1.8" fill="#c6c6c6" stroke="#939393" stroke-width="0.75"/><ellipse cx="725.3" cy="262.6" rx="3.5" ry="2.3" fill="#c6c6c6" stroke="#939393" stroke-width="0.75"/><ellipse cx="695.4" cy="263.1" rx="2.1" ry="6.0" fill="#c6c6c6" stroke="#939393" stroke-width="0.75"/><ellipse cx="655.1" cy="270.6" rx="3.4" ry="1.8" fill="#c6c6c6" stroke="#939393" stroke-width="0.75"/><ellipse cx="698.1" cy="232.6" rx="2.3" ry="1.8" fill="#c6c6c6" stroke="#939393" stroke-width="0.75"/><ellipse cx="666.6" cy="232.7" rx="2.1" ry="4.4" fill="#c6c6c6" stroke="#939393" stroke-width="0.75"/><ellipse cx="674.3" cy="260.6" rx="3.1" ry="2.2" fill="#c6c6c6" stroke="#939393" stroke-width="0.75"/><ellipse cx="664.1" cy="248.5" rx="2.8" ry="2.2" fill="#c6c6c6" stroke="#939393" stroke-width="0.75"/><ellipse cx="698.7" cy="228.2" rx="2.6" ry="2.2" fill="#c6c6c6" stroke="#939393" stroke-width="0.75"/><ellipse cx="685.4" cy="287.8" rx="2.7" ry="2.2" fill="#c6c6c6" stroke="#939393" stroke-width="0.75"/><ellipse cx="731.5" cy="280.4" rx="2.6" ry="2.5" fill="#c6c6c6" stroke="#939393" stroke-width="0.75"/><ellipse cx="727.3" cy="245.0" rx="3.0" ry="2.1" fill="#c6c6c6" stroke="#939393" stroke-width="0.75"/><ellipse cx="648.0" cy="301.8" rx="2.4" ry="2.4" fill="#c6c6c6" stroke="#939393" stroke-width="0.75"/><ellipse cx="729.1" cy="281.2" rx="2.1" ry="2.3" fill="#c6c6c6" stroke="#939393" stroke-width="0.75"/><ellipse cx="708.8" cy="263.6" rx="2.5" ry="2.5" fill="#c6c6c6" stroke="#939393" stroke-width="0.75"/><ellipse cx="661.1" cy="253.2" rx="2.5" ry="2.4" fill="#c6c6c6" stroke="#939393" stroke-width="0.75"/><ellipse cx="728.1" cy="259.0" rx="3.4" ry="2.1" fill="#c6c6c6" stroke="#939393" stroke-width="0.75"/><ellipse cx="702.9" cy="252.9" rx="3.6" ry="2.6" fill="#c6c6c6" stroke="#939393" stroke-width="0.75"/><ellipse cx="704.4" cy="284.2" rx="2.8" ry="5.1" fill="#c6c6c6" stroke="#939393" stroke-width="0.75"/><ellipse cx="720.0" cy="266.6" rx="2.2" ry="2.4" fill="#c6c6c6" stroke="#939393" stroke-width="0.75"/><ellipse cx="666.6" cy="266.8" rx="3.1" ry="2.0" fill="#c6c6c6" stroke="#939393" stroke-width="0.75"/><ellipse cx="694.7" cy="255.5" rx="2.6" ry="2.6" fill="#c6c6c6" stroke="#939393" stroke-width="0.75"/><ellipse cx="688.2" cy="225.4" rx="3.4" ry="1.8" fill="#c6c6c6" stroke="#939393" stroke-width="0.75"/><ellipse cx="687.2" cy="298.2" rx="3.4" ry="2.3" fill="#c6c6c6" stroke="#939393" stroke-width="0.75"/><ellipse cx="686.0" cy="263.0" rx="2.8" ry="2.1" fill="#c6c6c6" stroke="#939393" stroke-width="0.75"/><ellipse cx="647.9" cy="270.5" rx="2.9" ry="2.0" fill="#c6c6c6" stroke="#939393" stroke-width="0.75"/><ellipse cx="693.9" cy="224.7" rx="2.5" ry="2.4" fill="#c6c6c6" stroke="#939393" stroke-width="0.75"/><ellipse cx="677.0" cy="263.5" rx="3.1" ry="2.4" fill="#c6c6c6" stroke="#939393" stroke-width="0.75"/><ellipse cx="652.9" cy="287.4" rx="2.2" ry="2.3" fill="#c6c6c6" stroke="#939393" stroke-width="0.75"/><ellipse cx="681.8" cy="257.2" rx="2.9" ry="1.9" fill="#c6c6c6" stroke="#939393" stroke-width="0.75"/><ellipse cx="701.3" cy="266.3" rx="2.9" ry="2.4" fill="#c6c6c6" stroke="#939393" stroke-width="0.75"/><ellipse cx="652.0" cy="243.2" rx="3.4" ry="2.3" fill="#c6c6c6" stroke="#939393" stroke-width="0.75"/><ellipse cx="659.6" cy="249.3" rx="1.7" ry="4.9" fill="#c6c6c6" stroke="#939393" stroke-width="0.75"/><ellipse cx="686.5" cy="235.5" rx="3.2" ry="1.7" fill="#c6c6c6" stroke="#939393" stroke-width="0.75"/><ellipse cx="684.4" cy="273.8" rx="3.0" ry="2.1" fill="#c6c6c6" stroke="#939393" stroke-width="0.75"/><ellipse cx="693.9" cy="287.2" rx="2.0" ry="2.4" fill="#c6c6c6" stroke="#939393" stroke-width="0.75"/><ellipse cx="681.5" cy="277.9" rx="2.1" ry="1.9" fill="#c6c6c6" stroke="#939393" stroke-width="0.75"/><ellipse cx="690.7" cy="234.9" rx="1.8" ry="6.2" fill="#c6c6c6" stroke="#939393" stroke-width="0.75"/><ellipse cx="737.8" cy="266.4" rx="2.4" ry="1.7" fill="#c6c6c6" stroke="#939393" stroke-width="0.75"/><ellipse cx="719.6" cy="252.6" rx="1.7" ry="4.1" fill="#c6c6c6" stroke="#939393" stroke-width="0.75"/><ellipse cx="666.2" cy="252.2" rx="2.1" ry="2.0" fill="#c6c6c6" stroke="#939393" stroke-width="0.75"/><ellipse cx="698.5" cy="252.3" rx="3.2" ry="2.5" fill="#c6c6c6" stroke="#939393" stroke-width="0.75"/><ellipse cx="662.6" cy="259.6" rx="3.5" ry="1.9" fill="#c6c6c6" stroke="#939393" stroke-width="0.75"/><ellipse cx="645.8" cy="255.8" rx="2.1" ry="1.7" fill="#c6c6c6" stroke="#939393" stroke-width="0.75"/><ellipse cx="735.5" cy="276.7" rx="2.2" ry="2.5" fill="#c6c6c6" stroke="#939393" stroke-width="0.75"/><ellipse cx="716.8" cy="256.7" rx="2.8" ry="1.8" fill="#c6c6c6" stroke="#939393" stroke-width="0.75"/><ellipse cx="684.9" cy="245.5" rx="3.6" ry="2.4" fill="#c6c6c6" stroke="#939393" stroke-width="0.75"/><ellipse cx="664.4" cy="284.1" rx="3.3" ry="2.1" fill="#c6c6c6" stroke="#939393" stroke-width="0.75"/><ellipse cx="686.5" cy="228.6" rx="2.0" ry="2.0" fill="#c6c6c6" stroke="#939393" stroke-width="0.75"/><ellipse cx="705.5" cy="252.8" rx="2.2" ry="3.7" fill="#c6c6c6" stroke="#939393" stroke-width="0.75"/><ellipse cx="709.8" cy="281.7" rx="2.6" ry="4.9" fill="#c6c6c6" stroke="#939393" stroke-width="0.75"/><ellipse cx="655.1" cy="221.9" rx="3.3" ry="2.3" fill="#c6c6c6" stroke="#939393" stroke-width="0.75"/><ellipse cx="656.6" cy="249.5" rx="2.8" ry="2.1" fill="#c6c6c6" stroke="#939393" stroke-width="0.75"/><ellipse cx="670.1" cy="281.8" rx="2.7" ry="4.1" fill="#c6c6c6" stroke="#939393" stroke-width="0.75"/><ellipse cx="696.4" cy="222.2" rx="2.7" ry="2.4" fill="#c6c6c6" stroke="#939393" stroke-width="0.75"/><ellipse cx="693.5" cy="252.6" rx="2.8" ry="2.0" fill="#c6c6c6" stroke="#939393" stroke-width="0.75"/><ellipse cx="700.4" cy="263.5" rx="1.9" ry="3.6" fill="#c6c6c6" stroke="#939393" stroke-width="0.75"/><ellipse cx="701.5" cy="260.4" rx="2.3" ry="2.3" fill="#c6c6c6" stroke="#939393" stroke-width="0.75"/><ellipse cx="677.8" cy="276.9" rx="2.3" ry="1.9" fill="#c6c6c6" stroke="#939393" stroke-width="0.75"/><ellipse cx="673.6" cy="262.9" rx="3.6" ry="2.5" fill="#c6c6c6" stroke="#939393" stroke-width="0.75"/><ellipse cx="661.7" cy="288.5" rx="1.7" ry="4.9" fill="#c6c6c6" stroke="#939393" stroke-width="0.75"/><ellipse cx="657.3" cy="252.4" rx="3.1" ry="2.3" fill="#c6c6c6" stroke="#939393" stroke-width="0.75"/><ellipse cx="681.4" cy="291.5" rx="3.3" ry="2.1" fill="#c6c6c6" stroke="#939393" stroke-width="0.75"/><ellipse cx="672.9" cy="276.6" rx="2.5" ry="2.4" fill="#c6c6c6" stroke="#939393" stroke-width="0.75"/><ellipse cx="675.3" cy="273.2" rx="2.5" ry="2.0" fill="#c6c6c6" stroke="#939393" stroke-width="0.75"/><ellipse cx="659.7" cy="263.3" rx="2.3" ry="2.3" fill="#c6c6c6" stroke="#939393" stroke-width="0.75"/><ellipse cx="654.9" cy="242.2" rx="2.0" ry="2.0" fill="#c6c6c6" stroke="#939393" stroke-width="0.75"/><ellipse cx="670.3" cy="295.6" rx="3.1" ry="2.5" fill="#c6c6c6" stroke="#939393" stroke-width="0.75"/><ellipse cx="669.8" cy="220.4" rx="2.8" ry="2.0" fill="#c6c6c6" stroke="#939393" stroke-width="0.75"/><ellipse cx="699.7" cy="241.5" rx="2.4" ry="5.4" fill="#c6c6c6" stroke="#939393" stroke-width="0.75"/><ellipse cx="654.8" cy="278.4" rx="2.1" ry="2.4" fill="#c6c6c6" stroke="#939393" stroke-width="0.75"/><ellipse cx="676.6" cy="246.1" rx="2.7" ry="2.5" fill="#c6c6c6" stroke="#939393" stroke-width="0.75"/><ellipse cx="740.3" cy="271.4" rx="2.7" ry="2.3" fill="#c6c6c6" stroke="#939393" stroke-width="0.75"/><ellipse cx="689.3" cy="287.9" rx="3.2" ry="2.4" fill="#c6c6c6" stroke="#939393" stroke-width="0.75"/><ellipse cx="669.9" cy="269.7" rx="2.1" ry="2.4" fill="#c6c6c6" stroke="#939393" stroke-width="0.75"/><ellipse cx="686.5" cy="270.0" rx="5.5" ry="2.9" fill="#c6c6c6" stroke="#939393" stroke-width="0.75"/><ellipse cx="710.4" cy="260.5" rx="5.2" ry="2.7" fill="#c6c6c6" stroke="#939393" stroke-width="0.75"/><ellipse cx="685.0" cy="263.1" rx="8.0" ry="2.7" fill="#c6c6c6" stroke="#939393" stroke-width="0.75"/><ellipse cx="693.5" cy="259.5" rx="5.5" ry="2.8" fill="#c6c6c6" stroke="#939393" stroke-width="0.75"/><ellipse cx="704.0" cy="265.1" rx="5.1" ry="2.9" fill="#c6c6c6" stroke="#939393" stroke-width="0.75"/><ellipse cx="702.8" cy="259.8" rx="7.5" ry="2.5" fill="#c6c6c6" stroke="#939393" stroke-width="0.75"/><ellipse cx="706.9" cy="261.7" rx="6.4" ry="2.4" fill="#c6c6c6" stroke="#939393" stroke-width="0.75"/><ellipse cx="694.8" cy="267.0" rx="7.5" ry="2.5" fill="#c6c6c6" stroke="#939393" stroke-width="0.75"/><ellipse cx="709.0" cy="257.9" rx="6.9" ry="2.3" fill="#c6c6c6" stroke="#939393" stroke-width="0.75"/><ellipse cx="710.4" cy="270.4" rx="7.5" ry="2.5" fill="#c6c6c6" stroke="#939393" stroke-width="0.75"/><ellipse cx="690.3" cy="250.8" rx="7.8" ry="2.8" fill="#c6c6c6" stroke="#939393" stroke-width="0.75"/><ellipse cx="695.0" cy="251.2" rx="7.8" ry="2.8" fill="#c6c6c6" stroke="#939393" stroke-width="0.75"/><ellipse cx="709.6" cy="258.8" rx="8.0" ry="2.6" fill="#c6c6c6" stroke="#939393" stroke-width="0.75"/><ellipse cx="706.5" cy="246.7" rx="6.8" ry="2.9" fill="#c6c6c6" stroke="#939393" stroke-width="0.75"/><ellipse cx="703.5" cy="271.4" rx="7.2" ry="2.5" fill="#c6c6c6" stroke="#939393" stroke-width="0.75"/><ellipse cx="704.4" cy="268.1" rx="7.4" ry="2.7" fill="#c6c6c6" stroke="#939393" stroke-width="0.75"/><ellipse cx="685.6" cy="246.0" rx="5.8" ry="2.5" fill="#c6c6c6" stroke="#939393" stroke-width="0.75"/><ellipse cx="706.0" cy="252.6" rx="5.1" ry="2.2" fill="#c6c6c6" stroke="#939393" stroke-width="0.75"/><ellipse cx="711.9" cy="251.9" rx="6.1" ry="2.9" fill="#c6c6c6" stroke="#939393" stroke-width="0.75"/><ellipse cx="710.6" cy="253.8" rx="7.2" ry="2.5" fill="#c6c6c6" stroke="#939393" stroke-width="0.75"/><ellipse cx="692.0" cy="270.5" rx="5.0" ry="2.7" fill="#c6c6c6" stroke="#939393" stroke-width="0.75"/><ellipse cx="705.2" cy="266.0" rx="7.0" ry="2.9" fill="#c6c6c6" stroke="#939393" stroke-width="0.75"/><ellipse cx="889.9" cy="270.6" rx="2.5" ry="2.4" fill="#c6c6c6" stroke="#939393" stroke-width="0.75"/><ellipse cx="898.3" cy="260.3" rx="2.5" ry="2.8" fill="#c6c6c6" stroke="#939393" stroke-width="0.75"/><ellipse cx="879.9" cy="253.5" rx="2.2" ry="2.5" fill="#c6c6c6" stroke="#939393" stroke-width="0.75"/><ellipse cx="891.7" cy="259.5" rx="2.2" ry="2.1" fill="#c6c6c6" stroke="#939393" stroke-width="0.75"/><ellipse cx="898.4" cy="246.6" rx="3.0" ry="2.3" fill="#c6c6c6" stroke="#939393" stroke-width="0.75"/><ellipse cx="895.3" cy="249.2" rx="2.4" ry="2.3" fill="#c6c6c6" stroke="#939393" stroke-width="0.75"/><ellipse cx="893.5" cy="246.4" rx="2.4" ry="2.1" fill="#c6c6c6" stroke="#939393" stroke-width="0.75"/><ellipse cx="878.7" cy="267.0" rx="2.6" ry="2.0" fill="#c6c6c6" stroke="#939393" stroke-width="0.75"/><ellipse cx="890.2" cy="242.1" rx="2.7" ry="2.3" fill="#c6c6c6" stroke="#939393" stroke-width="0.75"/><ellipse cx="884.2" cy="252.4" rx="2.9" ry="2.3" fill="#c6c6c6" stroke="#939393" stroke-width="0.75"/><ellipse cx="875.6" cy="267.6" rx="2.3" ry="2.4" fill="#c6c6c6" stroke="#939393" stroke-width="0.75"/><ellipse cx="902.8" cy="253.6" rx="2.7" ry="2.8" fill="#c6c6c6" stroke="#939393" stroke-width="0.75"/><ellipse cx="894.5" cy="241.7" rx="2.4" ry="2.7" fill="#c6c6c6" stroke="#939393" stroke-width="0.75"/><ellipse cx="893.9" cy="270.9" rx="2.6" ry="2.5" fill="#c6c6c6" stroke="#939393" stroke-width="0.75"/><ellipse cx="902.7" cy="255.5" rx="2.9" ry="2.4" fill="#c6c6c6" stroke="#939393" stroke-width="0.75"/><ellipse cx="876.2" cy="257.2" rx="2.2" ry="2.1" fill="#c6c6c6" stroke="#939393" stroke-width="0.75"/><ellipse cx="882.9" cy="266.0" rx="2.8" ry="2.0" fill="#c6c6c6" stroke="#939393" stroke-width="0.75"/><ellipse cx="898.2" cy="253.0" rx="2.5" ry="2.4" fill="#c6c6c6" stroke="#939393" stroke-width="0.75"/><ellipse cx="881.8" cy="264.3" rx="2.9" ry="2.3" fill="#c6c6c6" stroke="#939393" stroke-width="0.75"/><ellipse cx="893.4" cy="252.5" rx="2.9" ry="2.5" fill="#c6c6c6" stroke="#939393" stroke-width="0.75"/><ellipse cx="881.1" cy="255.7" rx="2.3" ry="2.3" fill="#c6c6c6" stroke="#939393" stroke-width="0.75"/><ellipse cx="903.0" cy="262.4" rx="2.8" ry="2.2" fill="#c6c6c6" stroke="#939393" stroke-width="0.75"/><ellipse cx="889.4" cy="264.1" rx="2.4" ry="2.3" fill="#c6c6c6" stroke="#939393" stroke-width="0.75"/><ellipse cx="900.2" cy="264.1" rx="2.5" ry="2.2" fill="#c6c6c6" stroke="#939393" stroke-width="0.75"/><ellipse cx="886.2" cy="263.8" rx="2.8" ry="2.1" fill="#c6c6c6" stroke="#939393" stroke-width="0.75"/><ellipse cx="885.1" cy="246.5" rx="2.0" ry="2.2" fill="#c6c6c6" stroke="#939393" stroke-width="0.75"/><ellipse cx="888.0" cy="253.4" rx="2.6" ry="3.9" fill="#c6c6c6" stroke="#939393" stroke-width="0.75"/><ellipse cx="901.5" cy="266.1" rx="2.1" ry="2.2" fill="#c6c6c6" stroke="#939393" stroke-width="0.75"/><ellipse cx="893.6" cy="267.3" rx="2.7" ry="2.7" fill="#c6c6c6" stroke="#939393" stroke-width="0.75"/><ellipse cx="901.5" cy="245.6" rx="2.6" ry="2.7" fill="#c6c6c6" stroke="#939393" stroke-width="0.75"/><ellipse cx="895.3" cy="263.1" rx="2.7" ry="4.8" fill="#c6c6c6" stroke="#939393" stroke-width="0.75"/><ellipse cx="886.3" cy="257.1" rx="2.7" ry="2.7" fill="#c6c6c6" stroke="#939393" stroke-width="0.75"/><ellipse cx="874.4" cy="245.4" rx="2.1" ry="2.7" fill="#c6c6c6" stroke="#939393" stroke-width="0.75"/><ellipse cx="880.3" cy="246.4" rx="2.6" ry="2.8" fill="#c6c6c6" stroke="#939393" stroke-width="0.75"/><ellipse cx="895.4" cy="256.4" rx="1.7" ry="3.9" fill="#c6c6c6" stroke="#939393" stroke-width="0.75"/><ellipse cx="885.7" cy="242.2" rx="2.4" ry="5.4" fill="#c6c6c6" stroke="#939393" stroke-width="0.75"/><ellipse cx="876.4" cy="259.2" rx="2.2" ry="2.1" fill="#c6c6c6" stroke="#939393" stroke-width="0.75"/><ellipse cx="899.9" cy="242.5" rx="2.7" ry="2.8" fill="#c6c6c6" stroke="#939393" stroke-width="0.75"/><ellipse cx="879.1" cy="259.8" rx="3.0" ry="2.3" fill="#c6c6c6" stroke="#939393" stroke-width="0.75"/><ellipse cx="891.0" cy="257.0" rx="2.3" ry="2.2" fill="#c6c6c6" stroke="#939393" stroke-width="0.75"/><ellipse cx="875.1" cy="252.5" rx="3.0" ry="2.6" fill="#c6c6c6" stroke="#939393" stroke-width="0.75"/><ellipse cx="887.1" cy="250.0" rx="2.2" ry="2.1" fill="#c6c6c6" stroke="#939393" stroke-width="0.75"/><ellipse cx="888.4" cy="267.6" rx="2.7" ry="2.0" fill="#c6c6c6" stroke="#939393" stroke-width="0.75"/><ellipse cx="899.3" cy="256.4" rx="2.7" ry="2.0" fill="#c6c6c6" stroke="#939393" stroke-width="0.75"/><ellipse cx="888.5" cy="246.5" rx="2.8" ry="2.5" fill="#c6c6c6" stroke="#939393" stroke-width="0.75"/><ellipse cx="900.8" cy="260.1" rx="2.9" ry="2.5" fill="#c6c6c6" stroke="#939393" stroke-width="0.75"/><ellipse cx="880.8" cy="248.5" rx="2.4" ry="2.8" fill="#c6c6c6" stroke="#939393" stroke-width="0.75"/><ellipse cx="897.7" cy="266.3" rx="2.9" ry="2.4" fill="#c6c6c6" stroke="#939393" stroke-width="0.75"/><ellipse cx="877.0" cy="264.3" rx="2.2" ry="2.3" fill="#c6c6c6" stroke="#939393" stroke-width="0.75"/><ellipse cx="886.4" cy="269.8" rx="2.0" ry="2.6" fill="#c6c6c6" stroke="#939393" stroke-width="0.75"/><ellipse cx="878.0" cy="249.0" rx="2.5" ry="2.0" fill="#c6c6c6" stroke="#939393" stroke-width="0.75"/><ellipse cx="884.6" cy="259.0" rx="2.4" ry="2.5" fill="#c6c6c6" stroke="#939393" stroke-width="0.75"/><ellipse cx="889.5" cy="249.0" rx="2.7" ry="2.3" fill="#c6c6c6" stroke="#939393" stroke-width="0.75"/><ellipse cx="898.3" cy="250.0" rx="3.0" ry="2.7" fill="#c6c6c6" stroke="#939393" stroke-width="0.75"/><ellipse cx="889.1" cy="260.0" rx="2.3" ry="2.3" fill="#c6c6c6" stroke="#939393" stroke-width="0.75"/><ellipse cx="561.0" cy="279.0" rx="3.0" ry="2.2" fill="#c6c6c6" stroke="#939393" stroke-width="0.75"/><ellipse cx="561.0" cy="284.0" rx="3.0" ry="2.4" fill="#c6c6c6" stroke="#939393" stroke-width="0.75"/><ellipse cx="561.0" cy="289.0" rx="3.0" ry="2.4" fill="#c6c6c6" stroke="#939393" stroke-width="0.75"/><ellipse cx="561.0" cy="294.0" rx="3.0" ry="2.5" fill="#c6c6c6" stroke="#939393" stroke-width="0.75"/><ellipse cx="561.0" cy="301.0" rx="3.0" ry="4.5" fill="#c6c6c6" stroke="#939393" stroke-width="0.75"/><ellipse cx="577.4" cy="275.2" rx="3.5" ry="2.0" fill="#c6c6c6" stroke="#939393" stroke-width="0.75"/><ellipse cx="571.0" cy="279.0" rx="3.0" ry="2.0" fill="#c6c6c6" stroke="#939393" stroke-width="0.75"/><ellipse cx="569.0" cy="284.0" rx="2.5" ry="2.5" fill="#c6c6c6" stroke="#939393" stroke-width="0.75"/><ellipse cx="574.0" cy="290.0" rx="2.5" ry="3.0" fill="#c6c6c6" stroke="#939393" stroke-width="0.75"/><ellipse cx="573.0" cy="296.0" rx="2.0" ry="4.0" fill="#c6c6c6" stroke="#939393" stroke-width="0.75"/><ellipse cx="579.0" cy="301.0" rx="3.0" ry="4.5" fill="#c6c6c6" stroke="#939393" stroke-width="0.75"/><ellipse cx="584.0" cy="306.0" rx="3.5" ry="3.5" fill="#c6c6c6" stroke="#939393" stroke-width="0.75"/><ellipse cx="598.3" cy="324.6" rx="3.5" ry="2.5" fill="#c6c6c6" stroke="#939393" stroke-width="0.75"/><ellipse cx="585.6" cy="340.1" rx="6.0" ry="3.5" fill="#c6c6c6" stroke="#939393" stroke-width="0.75"/><ellipse cx="578.8" cy="355.6" rx="3.0" ry="8.0" fill="#c6c6c6" stroke="#939393" stroke-width="0.75"/><ellipse cx="581.6" cy="355.0" rx="4.0" ry="2.0" fill="#c6c6c6" stroke="#939393" stroke-width="0.75"/><ellipse cx="576.1" cy="376.2" rx="3.0" ry="3.0" fill="#c6c6c6" stroke="#939393" stroke-width="0.75"/><ellipse cx="569.5" cy="407.9" rx="3.5" ry="5.5" fill="#c6c6c6" stroke="#939393" stroke-width="0.75"/><ellipse cx="561.3" cy="443.2" rx="4.1" ry="8.9" fill="#c6c6c6" stroke="#939393" stroke-width="0.75"/><ellipse cx="547.4" cy="477.4" rx="2.5" ry="8.9" fill="#c6c6c6" stroke="#939393" stroke-width="0.75"/><ellipse cx="627.5" cy="349.2" rx="5.0" ry="4.0" fill="#c6c6c6" stroke="#939393" stroke-width="0.75"/><ellipse cx="628.4" cy="353.8" rx="4.5" ry="5.0" fill="#c6c6c6" stroke="#939393" stroke-width="0.75"/><ellipse cx="626.0" cy="362.0" rx="5.5" ry="6.5" fill="#c6c6c6" stroke="#939393" stroke-width="0.75"/><ellipse cx="636.6" cy="347.8" rx="3.5" ry="3.0" fill="#c6c6c6" stroke="#939393" stroke-width="0.75"/><ellipse cx="643.6" cy="333.2" rx="3.5" ry="2.5" fill="#c6c6c6" stroke="#939393" stroke-width="0.75"/><ellipse cx="649.0" cy="320.0" rx="2.5" ry="4.5" fill="#c6c6c6" stroke="#939393" stroke-width="0.75"/><ellipse cx="652.7" cy="327.0" rx="3.0" ry="3.0" fill="#c6c6c6" stroke="#939393" stroke-width="0.75"/><ellipse cx="657.6" cy="308.8" rx="6.0" ry="2.0" fill="#c6c6c6" stroke="#939393" stroke-width="0.75"/><ellipse cx="648.4" cy="367.5" rx="2.0" ry="17.5" fill="#c6c6c6" stroke="#939393" stroke-width="0.75"/><ellipse cx="650.3" cy="393.0" rx="2.5" ry="8.0" fill="#c6c6c6" stroke="#939393" stroke-width="0.75"/><ellipse cx="673.0" cy="362.8" rx="9.8" ry="22.8" fill="#c6c6c6" stroke="#939393" stroke-width="0.75"/><ellipse cx="675.0" cy="347.4" rx="2.5" ry="9.0" fill="#c6c6c6" stroke="#939393" stroke-width="0.75"/><ellipse cx="669.5" cy="327.8" rx="2.0" ry="11.4" fill="#c6c6c6" stroke="#939393" stroke-width="0.75"/><ellipse cx="675.3" cy="304.6" rx="2.0" ry="3.0" fill="#c6c6c6" stroke="#939393" stroke-width="0.75"/><ellipse cx="675.8" cy="311.9" rx="5.0" ry="2.5" fill="#c6c6c6" stroke="#939393" stroke-width="0.75"/><ellipse cx="675.8" cy="329.2" rx="2.5" ry="6.0" fill="#c6c6c6" stroke="#939393" stroke-width="0.75"/><ellipse cx="665.8" cy="320.0" rx="2.3" ry="2.5" fill="#c6c6c6" stroke="#939393" stroke-width="0.75"/><ellipse cx="683.1" cy="319.7" rx="2.5" ry="2.0" fill="#c6c6c6" stroke="#939393" stroke-width="0.75"/><ellipse cx="688.6" cy="320.0" rx="3.0" ry="2.0" fill="#c6c6c6" stroke="#939393" stroke-width="0.75"/><ellipse cx="690.4" cy="312.4" rx="6.0" ry="2.5" fill="#c6c6c6" stroke="#939393" stroke-width="0.75"/><ellipse cx="694.1" cy="315.5" rx="3.0" ry="3.5" fill="#c6c6c6" stroke="#939393" stroke-width="0.75"/><ellipse cx="692.8" cy="327.0" rx="3.0" ry="3.0" fill="#c6c6c6" stroke="#939393" stroke-width="0.75"/><ellipse cx="693.1" cy="303.6" rx="2.5" ry="4.0" fill="#c6c6c6" stroke="#939393" stroke-width="0.75"/><ellipse cx="718.3" cy="324.6" rx="3.5" ry="2.0" fill="#c6c6c6" stroke="#939393" stroke-width="0.75"/><ellipse cx="698.7" cy="358.1" rx="7.8" ry="5.9" fill="#c6c6c6" stroke="#939393" stroke-width="0.75"/><ellipse cx="736.9" cy="344.5" rx="3.0" ry="6.5" fill="#c6c6c6" stroke="#939393" stroke-width="0.75"/><ellipse cx="738.7" cy="329.2" rx="2.0" ry="2.0" fill="#c6c6c6" stroke="#939393" stroke-width="0.75"/><ellipse cx="696.5" cy="284.2" rx="6.0" ry="3.0" fill="#c6c6c6" stroke="#939393" stroke-width="0.75"/><ellipse cx="711.5" cy="277.7" rx="5.0" ry="3.5" fill="#c6c6c6" stroke="#939393" stroke-width="0.75"/><ellipse cx="725.0" cy="282.3" rx="6.0" ry="6.0" fill="#c6c6c6" stroke="#939393" stroke-width="0.75"/><ellipse cx="721.2" cy="296.0" rx="2.0" ry="5.0" fill="#c6c6c6" stroke="#939393" stroke-width="0.75"/><ellipse cx="721.0" cy="287.0" rx="2.0" ry="4.0" fill="#c6c6c6" stroke="#939393" stroke-width="0.75"/><ellipse cx="734.6" cy="215.9" rx="5.0" ry="3.0" fill="#c6c6c6" stroke="#939393" stroke-width="0.75"/><ellipse cx="734.6" cy="232.7" rx="5.0" ry="3.0" fill="#c6c6c6" stroke="#939393" stroke-width="0.75"/><ellipse cx="741.4" cy="240.2" rx="5.5" ry="2.5" fill="#c6c6c6" stroke="#939393" stroke-width="0.75"/><ellipse cx="748.0" cy="240.9" rx="3.0" ry="2.5" fill="#c6c6c6" stroke="#939393" stroke-width="0.75"/><ellipse cx="740.0" cy="246.5" rx="6.0" ry="2.5" fill="#c6c6c6" stroke="#939393" stroke-width="0.75"/><ellipse cx="755.8" cy="251.4" rx="5.5" ry="2.5" fill="#c6c6c6" stroke="#939393" stroke-width="0.75"/><ellipse cx="746.0" cy="253.0" rx="5.0" ry="2.5" fill="#c6c6c6" stroke="#939393" stroke-width="0.75"/><ellipse cx="748.3" cy="260.0" rx="4.0" ry="3.0" fill="#c6c6c6" stroke="#939393" stroke-width="0.75"/><ellipse cx="738.2" cy="258.2" rx="2.0" ry="4.5" fill="#c6c6c6" stroke="#939393" stroke-width="0.75"/><ellipse cx="738.2" cy="270.0" rx="3.0" ry="6.0" fill="#c6c6c6" stroke="#939393" stroke-width="0.75"/><ellipse cx="747.3" cy="271.2" rx="5.0" ry="2.5" fill="#c6c6c6" stroke="#939393" stroke-width="0.75"/><ellipse cx="740.8" cy="277.0" rx="5.0" ry="2.5" fill="#c6c6c6" stroke="#939393" stroke-width="0.75"/><ellipse cx="739.5" cy="291.8" rx="5.5" ry="2.2" fill="#c6c6c6" stroke="#939393" stroke-width="0.75"/><ellipse cx="748.0" cy="284.9" rx="3.5" ry="3.5" fill="#c6c6c6" stroke="#939393" stroke-width="0.75"/><ellipse cx="755.8" cy="287.9" rx="5.0" ry="2.5" fill="#c6c6c6" stroke="#939393" stroke-width="0.75"/><ellipse cx="773.2" cy="231.8" rx="5.0" ry="6.5" fill="#c6c6c6" stroke="#939393" stroke-width="0.75"/><ellipse cx="773.0" cy="239.9" rx="3.5" ry="2.5" fill="#c6c6c6" stroke="#939393" stroke-width="0.75"/><ellipse cx="773.2" cy="247.9" rx="4.0" ry="3.5" fill="#c6c6c6" stroke="#939393" stroke-width="0.75"/><ellipse cx="774.0" cy="254.7" rx="4.5" ry="3.0" fill="#c6c6c6" stroke="#939393" stroke-width="0.75"/><ellipse cx="771.0" cy="262.1" rx="4.0" ry="3.0" fill="#c6c6c6" stroke="#939393" stroke-width="0.75"/><ellipse cx="762.0" cy="264.0" rx="6.2" ry="8.0" fill="#c6c6c6" stroke="#939393" stroke-width="0.75"/><ellipse cx="763.0" cy="259.7" rx="3.0" ry="3.0" fill="#c6c6c6" stroke="#939393" stroke-width="0.75"/><ellipse cx="771.0" cy="265.8" rx="4.0" ry="2.5" fill="#c6c6c6" stroke="#939393" stroke-width="0.75"/><ellipse cx="773.5" cy="274.5" rx="4.5" ry="5.0" fill="#c6c6c6" stroke="#939393" stroke-width="0.75"/><ellipse cx="769.0" cy="274.5" rx="2.0" ry="5.0" fill="#c6c6c6" stroke="#939393" stroke-width="0.75"/><ellipse cx="761.7" cy="280.7" rx="5.0" ry="7.0" fill="#c6c6c6" stroke="#939393" stroke-width="0.75"/><ellipse cx="769.8" cy="284.4" rx="4.0" ry="3.0" fill="#c6c6c6" stroke="#939393" stroke-width="0.75"/><ellipse cx="772.2" cy="296.8" rx="4.5" ry="8.5" fill="#c6c6c6" stroke="#939393" stroke-width="0.75"/><ellipse cx="771.0" cy="309.2" rx="4.5" ry="4.5" fill="#c6c6c6" stroke="#939393" stroke-width="0.75"/><ellipse cx="761.7" cy="291.8" rx="5.0" ry="6.5" fill="#c6c6c6" stroke="#939393" stroke-width="0.75"/><ellipse cx="757.4" cy="306.7" rx="3.5" ry="3.5" fill="#c6c6c6" stroke="#939393" stroke-width="0.75"/><ellipse cx="755.5" cy="315.3" rx="3.5" ry="7.0" fill="#c6c6c6" stroke="#939393" stroke-width="0.75"/><ellipse cx="756.0" cy="287.5" rx="6.0" ry="2.5" fill="#c6c6c6" stroke="#939393" stroke-width="0.75"/><ellipse cx="747.5" cy="284.4" rx="3.5" ry="3.5" fill="#c6c6c6" stroke="#939393" stroke-width="0.75"/><ellipse cx="747.5" cy="289.4" rx="3.5" ry="2.5" fill="#c6c6c6" stroke="#939393" stroke-width="0.75"/><ellipse cx="756.0" cy="251.6" rx="5.5" ry="2.5" fill="#c6c6c6" stroke="#939393" stroke-width="0.75"/><ellipse cx="747.5" cy="250.4" rx="3.0" ry="2.5" fill="#c6c6c6" stroke="#939393" stroke-width="0.75"/><ellipse cx="748.1" cy="260.3" rx="4.0" ry="3.0" fill="#c6c6c6" stroke="#939393" stroke-width="0.75"/><ellipse cx="747.5" cy="271.4" rx="4.5" ry="2.5" fill="#c6c6c6" stroke="#939393" stroke-width="0.75"/><ellipse cx="747.5" cy="241.0" rx="3.0" ry="2.0" fill="#c6c6c6" stroke="#939393" stroke-width="0.75"/><ellipse cx="740.0" cy="329.0" rx="3.5" ry="2.5" fill="#c6c6c6" stroke="#939393" stroke-width="0.75"/><ellipse cx="753.3" cy="336.3" rx="1.5" ry="8.0" fill="#c6c6c6" stroke="#939393" stroke-width="0.75"/><ellipse cx="753.8" cy="341.5" rx="2.0" ry="11.0" fill="#c6c6c6" stroke="#939393" stroke-width="0.75"/><ellipse cx="752.6" cy="385.0" rx="3.0" ry="15.5" fill="#c6c6c6" stroke="#939393" stroke-width="0.75"/><ellipse cx="754.6" cy="370.0" rx="3.0" ry="2.0" fill="#c6c6c6" stroke="#939393" stroke-width="0.75"/><ellipse cx="788.3" cy="238.6" rx="5.0" ry="5.5" fill="#c6c6c6" stroke="#939393" stroke-width="0.75"/><ellipse cx="785.2" cy="243.0" rx="2.5" ry="2.5" fill="#c6c6c6" stroke="#939393" stroke-width="0.75"/><ellipse cx="791.4" cy="242.3" rx="2.5" ry="2.5" fill="#c6c6c6" stroke="#939393" stroke-width="0.75"/><ellipse cx="796.4" cy="241.0" rx="2.5" ry="2.5" fill="#c6c6c6" stroke="#939393" stroke-width="0.75"/><ellipse cx="798.2" cy="247.3" rx="2.5" ry="2.5" fill="#c6c6c6" stroke="#939393" stroke-width="0.75"/><ellipse cx="791.4" cy="258.4" rx="2.0" ry="4.0" fill="#c6c6c6" stroke="#939393" stroke-width="0.75"/><ellipse cx="797.6" cy="260.3" rx="2.5" ry="2.5" fill="#c6c6c6" stroke="#939393" stroke-width="0.75"/><ellipse cx="795.1" cy="266.5" rx="3.0" ry="2.0" fill="#c6c6c6" stroke="#939393" stroke-width="0.75"/><ellipse cx="795.7" cy="280.7" rx="6.0" ry="7.0" fill="#c6c6c6" stroke="#939393" stroke-width="0.75"/><ellipse cx="791.4" cy="274.5" rx="2.5" ry="9.5" fill="#c6c6c6" stroke="#939393" stroke-width="0.75"/><ellipse cx="785.2" cy="277.0" rx="3.0" ry="3.0" fill="#c6c6c6" stroke="#939393" stroke-width="0.75"/><ellipse cx="785.2" cy="290.0" rx="2.5" ry="3.0" fill="#c6c6c6" stroke="#939393" stroke-width="0.75"/><ellipse cx="792.0" cy="292.5" rx="2.5" ry="3.0" fill="#c6c6c6" stroke="#939393" stroke-width="0.75"/><ellipse cx="803.2" cy="268.3" rx="3.0" ry="3.0" fill="#c6c6c6" stroke="#939393" stroke-width="0.75"/><ellipse cx="805.7" cy="231.4" rx="4.5" ry="8.5" fill="#c6c6c6" stroke="#939393" stroke-width="0.75"/><ellipse cx="818.0" cy="230.2" rx="2.5" ry="2.0" fill="#c6c6c6" stroke="#939393" stroke-width="0.75"/><ellipse cx="805.7" cy="268.4" rx="4.5" ry="3.0" fill="#c6c6c6" stroke="#939393" stroke-width="0.75"/><ellipse cx="814.8" cy="264.8" rx="2.5" ry="3.0" fill="#c6c6c6" stroke="#939393" stroke-width="0.75"/><ellipse cx="824.3" cy="268.4" rx="2.5" ry="5.5" fill="#c6c6c6" stroke="#939393" stroke-width="0.75"/><ellipse cx="814.8" cy="278.8" rx="2.5" ry="3.0" fill="#c6c6c6" stroke="#939393" stroke-width="0.75"/><ellipse cx="818.4" cy="277.0" rx="2.5" ry="4.0" fill="#c6c6c6" stroke="#939393" stroke-width="0.75"/><ellipse cx="818.4" cy="284.3" rx="2.5" ry="3.0" fill="#c6c6c6" stroke="#939393" stroke-width="0.75"/><ellipse cx="813.9" cy="294.3" rx="2.5" ry="3.5" fill="#c6c6c6" stroke="#939393" stroke-width="0.75"/><ellipse cx="833.4" cy="363.8" rx="2.5" ry="5.0" fill="#c6c6c6" stroke="#939393" stroke-width="0.75"/><ellipse cx="872.2" cy="218.1" rx="2.0" ry="5.5" fill="#c6c6c6" stroke="#939393" stroke-width="0.75"/><ellipse cx="874.4" cy="242.7" rx="10.0" ry="4.0" fill="#c6c6c6" stroke="#939393" stroke-width="0.75"/><ellipse cx="871.6" cy="246.6" rx="7.0" ry="3.0" fill="#c6c6c6" stroke="#939393" stroke-width="0.75"/><ellipse cx="870.5" cy="254.9" rx="6.0" ry="4.5" fill="#c6c6c6" stroke="#939393" stroke-width="0.75"/><ellipse cx="869.4" cy="257.0" rx="5.5" ry="3.0" fill="#c6c6c6" stroke="#939393" stroke-width="0.75"/><ellipse cx="868.3" cy="271.5" rx="6.0" ry="2.5" fill="#c6c6c6" stroke="#939393" stroke-width="0.75"/><ellipse cx="870.5" cy="274.8" rx="4.5" ry="3.0" fill="#c6c6c6" stroke="#939393" stroke-width="0.75"/><ellipse cx="876.0" cy="275.9" rx="2.5" ry="2.5" fill="#c6c6c6" stroke="#939393" stroke-width="0.75"/><ellipse cx="881.0" cy="278.0" rx="7.2" ry="10.5" fill="#c6c6c6" stroke="#939393" stroke-width="0.75"/><ellipse cx="910.3" cy="248.8" rx="7.5" ry="13.0" fill="#c6c6c6" stroke="#939393" stroke-width="0.75"/><ellipse cx="914.7" cy="250.4" rx="3.0" ry="9.0" fill="#c6c6c6" stroke="#939393" stroke-width="0.75"/><ellipse cx="908.0" cy="266.0" rx="5.0" ry="5.0" fill="#c6c6c6" stroke="#939393" stroke-width="0.75"/><ellipse cx="912.0" cy="288.0" rx="5.2" ry="17.0" fill="#c6c6c6" stroke="#939393" stroke-width="0.75"/><ellipse cx="904.8" cy="296.9" rx="3.5" ry="6.5" fill="#c6c6c6" stroke="#939393" stroke-width="0.75"/><ellipse cx="899.2" cy="288.0" rx="2.0" ry="2.0" fill="#c6c6c6" stroke="#939393" stroke-width="0.75"/><ellipse cx="893.7" cy="278.7" rx="5.0" ry="2.5" fill="#c6c6c6" stroke="#939393" stroke-width="0.75"/><ellipse cx="903.7" cy="280.9" rx="3.0" ry="2.5" fill="#c6c6c6" stroke="#939393" stroke-width="0.75"/><ellipse cx="920.6" cy="241.6" rx="2.0" ry="4.0" fill="#c6c6c6" stroke="#939393" stroke-width="0.75"/><ellipse cx="920.6" cy="275.3" rx="2.0" ry="3.5" fill="#c6c6c6" stroke="#939393" stroke-width="0.75"/><ellipse cx="895.0" cy="319.5" rx="7.0" ry="3.5" fill="#c6c6c6" stroke="#939393" stroke-width="0.75"/><ellipse cx="903.0" cy="330.0" rx="3.5" ry="8.0" fill="#c6c6c6" stroke="#939393" stroke-width="0.75"/><ellipse cx="909.0" cy="325.0" rx="2.0" ry="7.0" fill="#c6c6c6" stroke="#939393" stroke-width="0.75"/>
<ellipse cx="563.0" cy="235.0" rx="3.0" ry="2.1" fill="#1a9090" stroke="#0b8080" stroke-width="0.9"/><ellipse cx="563.0" cy="239.3" rx="3.0" ry="2.1" fill="#1a9090" stroke="#0b8080" stroke-width="0.9"/><ellipse cx="563.0" cy="243.0" rx="3.0" ry="2.1" fill="#1a9090" stroke="#0b8080" stroke-width="0.9"/><ellipse cx="563.0" cy="247.0" rx="3.0" ry="2.1" fill="#1a9090" stroke="#0b8080" stroke-width="0.9"/><path d="M559 249Q562 247 566 249L567 262 566.5 272 563 277 559 272 557.5 262z" fill="#5aaaaa" stroke="#1a8a8a" stroke-width="0.8"/><ellipse cx="560.5" cy="249.5" rx="3.2" ry="2" fill="none" stroke="#0b8080" stroke-width="1"/><ellipse cx="563" cy="253" rx="3" ry="2" fill="none" stroke="#0b8080" stroke-width="1"/><ellipse cx="561" cy="256.5" rx="3.3" ry="2.2" fill="none" stroke="#0b8080" stroke-width="1"/><ellipse cx="564" cy="259" rx="2.5" ry="2" fill="none" stroke="#0b8080" stroke-width="1"/><ellipse cx="561" cy="262" rx="3.4" ry="2.2" fill="none" stroke="#0b8080" stroke-width="1"/><ellipse cx="563.5" cy="265" rx="3" ry="2" fill="none" stroke="#0b8080" stroke-width="1"/><ellipse cx="561" cy="268" rx="3.3" ry="2.2" fill="none" stroke="#0b8080" stroke-width="1"/><ellipse cx="563" cy="271.5" rx="3" ry="2.2" fill="none" stroke="#0b8080" stroke-width="1"/><ellipse cx="562.8" cy="275" rx="2.8" ry="2.2" fill="none" stroke="#0b8080" stroke-width="1"/><path d="M587.5 226Q589.5 221 592 225L595 232 598 225Q600 223 602 227L605 236 600 243 594 250 590 252 587.5 248z" fill="#84c2c2" stroke="#5aaaaa" stroke-width="0.8"/><ellipse cx="589.8" cy="224.5" rx="2.0" ry="1.8" fill="#1a9090" stroke="#0b8080" stroke-width="0.9"/><ellipse cx="590.0" cy="229.0" rx="2.0" ry="1.8" fill="#1a9090" stroke="#0b8080" stroke-width="0.9"/><ellipse cx="590.0" cy="233.0" rx="2.0" ry="1.8" fill="#1a9090" stroke="#0b8080" stroke-width="0.9"/><ellipse cx="589.5" cy="238.0" rx="2.0" ry="1.8" fill="#1a9090" stroke="#0b8080" stroke-width="0.9"/><ellipse cx="590.0" cy="243.0" rx="2.0" ry="1.8" fill="#1a9090" stroke="#0b8080" stroke-width="0.9"/><ellipse cx="590.5" cy="248.0" rx="2.0" ry="1.8" fill="#1a9090" stroke="#0b8080" stroke-width="0.9"/><ellipse cx="591.0" cy="251.0" rx="2.0" ry="1.8" fill="#1a9090" stroke="#0b8080" stroke-width="0.9"/><ellipse cx="599.0" cy="227.5" rx="2.0" ry="1.8" fill="#1a9090" stroke="#0b8080" stroke-width="0.9"/><ellipse cx="599.5" cy="232.0" rx="2.0" ry="1.8" fill="#1a9090" stroke="#0b8080" stroke-width="0.9"/><ellipse cx="601.0" cy="236.0" rx="2.0" ry="1.8" fill="#1a9090" stroke="#0b8080" stroke-width="0.9"/><ellipse cx="598.0" cy="239.0" rx="2.0" ry="1.8" fill="#1a9090" stroke="#0b8080" stroke-width="0.9"/><ellipse cx="594.0" cy="236.0" rx="2.0" ry="1.8" fill="#1a9090" stroke="#0b8080" stroke-width="0.9"/><ellipse cx="596.0" cy="241.0" rx="2.0" ry="1.8" fill="#1a9090" stroke="#0b8080" stroke-width="0.9"/><ellipse cx="592.5" cy="246.0" rx="2.0" ry="1.8" fill="#1a9090" stroke="#0b8080" stroke-width="0.9"/>
<line x1="470" y1="342.8" x2="659.4" y2="184" stroke="#111" stroke-width="1.4"/>
</g>
<rect x="470.5" y="184.5" width="465" height="328" fill="none" stroke="#6a6a6a" stroke-width="1.2"/>
<line x1="467" y1="506.0" x2="470" y2="506.0" stroke="#555" stroke-width="1"/><line x1="468" y1="490.1" x2="470" y2="490.1" stroke="#555" stroke-width="1"/><line x1="468" y1="480.8" x2="470" y2="480.8" stroke="#555" stroke-width="1"/><line x1="468" y1="474.2" x2="470" y2="474.2" stroke="#555" stroke-width="1"/><line x1="468" y1="469.1" x2="470" y2="469.1" stroke="#555" stroke-width="1"/><line x1="468" y1="464.9" x2="470" y2="464.9" stroke="#555" stroke-width="1"/><line x1="468" y1="461.3" x2="470" y2="461.3" stroke="#555" stroke-width="1"/><line x1="468" y1="458.3" x2="470" y2="458.3" stroke="#555" stroke-width="1"/><line x1="468" y1="455.6" x2="470" y2="455.6" stroke="#555" stroke-width="1"/><line x1="467" y1="453.1" x2="470" y2="453.1" stroke="#555" stroke-width="1"/><line x1="468" y1="437.2" x2="470" y2="437.2" stroke="#555" stroke-width="1"/><line x1="468" y1="427.9" x2="470" y2="427.9" stroke="#555" stroke-width="1"/><line x1="468" y1="421.3" x2="470" y2="421.3" stroke="#555" stroke-width="1"/><line x1="468" y1="416.2" x2="470" y2="416.2" stroke="#555" stroke-width="1"/><line x1="468" y1="412.0" x2="470" y2="412.0" stroke="#555" stroke-width="1"/><line x1="468" y1="408.5" x2="470" y2="408.5" stroke="#555" stroke-width="1"/><line x1="468" y1="405.4" x2="470" y2="405.4" stroke="#555" stroke-width="1"/><line x1="468" y1="402.7" x2="470" y2="402.7" stroke="#555" stroke-width="1"/><line x1="467" y1="400.3" x2="470" y2="400.3" stroke="#555" stroke-width="1"/><line x1="468" y1="384.4" x2="470" y2="384.4" stroke="#555" stroke-width="1"/><line x1="468" y1="375.1" x2="470" y2="375.1" stroke="#555" stroke-width="1"/><line x1="468" y1="368.5" x2="470" y2="368.5" stroke="#555" stroke-width="1"/><line x1="468" y1="363.4" x2="470" y2="363.4" stroke="#555" stroke-width="1"/><line x1="468" y1="359.2" x2="470" y2="359.2" stroke="#555" stroke-width="1"/><line x1="468" y1="355.7" x2="470" y2="355.7" stroke="#555" stroke-width="1"/><line x1="468" y1="352.6" x2="470" y2="352.6" stroke="#555" stroke-width="1"/><line x1="468" y1="349.9" x2="470" y2="349.9" stroke="#555" stroke-width="1"/><line x1="467" y1="347.5" x2="470" y2="347.5" stroke="#555" stroke-width="1"/><line x1="468" y1="331.6" x2="470" y2="331.6" stroke="#555" stroke-width="1"/><line x1="468" y1="322.3" x2="470" y2="322.3" stroke="#555" stroke-width="1"/><line x1="468" y1="315.7" x2="470" y2="315.7" stroke="#555" stroke-width="1"/><line x1="468" y1="310.6" x2="470" y2="310.6" stroke="#555" stroke-width="1"/><line x1="468" y1="306.4" x2="470" y2="306.4" stroke="#555" stroke-width="1"/><line x1="468" y1="302.8" x2="470" y2="302.8" stroke="#555" stroke-width="1"/><line x1="468" y1="299.8" x2="470" y2="299.8" stroke="#555" stroke-width="1"/><line x1="468" y1="297.1" x2="470" y2="297.1" stroke="#555" stroke-width="1"/><line x1="467" y1="294.7" x2="470" y2="294.7" stroke="#555" stroke-width="1"/><line x1="468" y1="278.8" x2="470" y2="278.8" stroke="#555" stroke-width="1"/><line x1="468" y1="269.5" x2="470" y2="269.5" stroke="#555" stroke-width="1"/><line x1="468" y1="262.9" x2="470" y2="262.9" stroke="#555" stroke-width="1"/><line x1="468" y1="257.7" x2="470" y2="257.7" stroke="#555" stroke-width="1"/><line x1="468" y1="253.6" x2="470" y2="253.6" stroke="#555" stroke-width="1"/><line x1="468" y1="250.0" x2="470" y2="250.0" stroke="#555" stroke-width="1"/><line x1="468" y1="246.9" x2="470" y2="246.9" stroke="#555" stroke-width="1"/><line x1="468" y1="244.2" x2="470" y2="244.2" stroke="#555" stroke-width="1"/><line x1="467" y1="241.8" x2="470" y2="241.8" stroke="#555" stroke-width="1"/><line x1="468" y1="225.9" x2="470" y2="225.9" stroke="#555" stroke-width="1"/><line x1="468" y1="216.6" x2="470" y2="216.6" stroke="#555" stroke-width="1"/><line x1="468" y1="210.0" x2="470" y2="210.0" stroke="#555" stroke-width="1"/><line x1="468" y1="204.9" x2="470" y2="204.9" stroke="#555" stroke-width="1"/><line x1="468" y1="200.7" x2="470" y2="200.7" stroke="#555" stroke-width="1"/><line x1="468" y1="197.2" x2="470" y2="197.2" stroke="#555" stroke-width="1"/><line x1="468" y1="194.1" x2="470" y2="194.1" stroke="#555" stroke-width="1"/><line x1="468" y1="191.4" x2="470" y2="191.4" stroke="#555" stroke-width="1"/><line x1="467" y1="189.0" x2="470" y2="189.0" stroke="#555" stroke-width="1"/><line x1="470.2" y1="512" x2="470.2" y2="514" stroke="#555" stroke-width="1"/><line x1="473.9" y1="512" x2="473.9" y2="514" stroke="#555" stroke-width="1"/><line x1="477.1" y1="512" x2="477.1" y2="514" stroke="#555" stroke-width="1"/><line x1="480.0" y1="512" x2="480.0" y2="515" stroke="#555" stroke-width="1"/><line x1="499.1" y1="512" x2="499.1" y2="514" stroke="#555" stroke-width="1"/><line x1="510.3" y1="512" x2="510.3" y2="514" stroke="#555" stroke-width="1"/><line x1="518.2" y1="512" x2="518.2" y2="514" stroke="#555" stroke-width="1"/><line x1="524.3" y1="512" x2="524.3" y2="514" stroke="#555" stroke-width="1"/><line x1="529.4" y1="512" x2="529.4" y2="514" stroke="#555" stroke-width="1"/><line x1="533.6" y1="512" x2="533.6" y2="514" stroke="#555" stroke-width="1"/><line x1="537.3" y1="512" x2="537.3" y2="514" stroke="#555" stroke-width="1"/><line x1="540.5" y1="512" x2="540.5" y2="514" stroke="#555" stroke-width="1"/><line x1="543.4" y1="512" x2="543.4" y2="515" stroke="#555" stroke-width="1"/><line x1="562.5" y1="512" x2="562.5" y2="514" stroke="#555" stroke-width="1"/><line x1="573.7" y1="512" x2="573.7" y2="514" stroke="#555" stroke-width="1"/><line x1="581.6" y1="512" x2="581.6" y2="514" stroke="#555" stroke-width="1"/><line x1="587.8" y1="512" x2="587.8" y2="514" stroke="#555" stroke-width="1"/><line x1="592.8" y1="512" x2="592.8" y2="514" stroke="#555" stroke-width="1"/><line x1="597.0" y1="512" x2="597.0" y2="514" stroke="#555" stroke-width="1"/><line x1="600.7" y1="512" x2="600.7" y2="514" stroke="#555" stroke-width="1"/><line x1="604.0" y1="512" x2="604.0" y2="514" stroke="#555" stroke-width="1"/><line x1="606.9" y1="512" x2="606.9" y2="515" stroke="#555" stroke-width="1"/><line x1="626.0" y1="512" x2="626.0" y2="514" stroke="#555" stroke-width="1"/><line x1="637.1" y1="512" x2="637.1" y2="514" stroke="#555" stroke-width="1"/><line x1="645.0" y1="512" x2="645.0" y2="514" stroke="#555" stroke-width="1"/><line x1="651.2" y1="512" x2="651.2" y2="514" stroke="#555" stroke-width="1"/><line x1="656.2" y1="512" x2="656.2" y2="514" stroke="#555" stroke-width="1"/><line x1="660.5" y1="512" x2="660.5" y2="514" stroke="#555" stroke-width="1"/><line x1="664.1" y1="512" x2="664.1" y2="514" stroke="#555" stroke-width="1"/><line x1="667.4" y1="512" x2="667.4" y2="514" stroke="#555" stroke-width="1"/><line x1="670.3" y1="512" x2="670.3" y2="515" stroke="#555" stroke-width="1"/><line x1="689.4" y1="512" x2="689.4" y2="514" stroke="#555" stroke-width="1"/><line x1="700.6" y1="512" x2="700.6" y2="514" stroke="#555" stroke-width="1"/><line x1="708.5" y1="512" x2="708.5" y2="514" stroke="#555" stroke-width="1"/><line x1="714.6" y1="512" x2="714.6" y2="514" stroke="#555" stroke-width="1"/><line x1="719.6" y1="512" x2="719.6" y2="514" stroke="#555" stroke-width="1"/><line x1="723.9" y1="512" x2="723.9" y2="514" stroke="#555" stroke-width="1"/><line x1="727.6" y1="512" x2="727.6" y2="514" stroke="#555" stroke-width="1"/><line x1="730.8" y1="512" x2="730.8" y2="514" stroke="#555" stroke-width="1"/><line x1="733.7" y1="512" x2="733.7" y2="515" stroke="#555" stroke-width="1"/><line x1="752.8" y1="512" x2="752.8" y2="514" stroke="#555" stroke-width="1"/><line x1="764.0" y1="512" x2="764.0" y2="514" stroke="#555" stroke-width="1"/><line x1="771.9" y1="512" x2="771.9" y2="514" stroke="#555" stroke-width="1"/><line x1="778.1" y1="512" x2="778.1" y2="514" stroke="#555" stroke-width="1"/><line x1="783.1" y1="512" x2="783.1" y2="514" stroke="#555" stroke-width="1"/><line x1="787.3" y1="512" x2="787.3" y2="514" stroke="#555" stroke-width="1"/><line x1="791.0" y1="512" x2="791.0" y2="514" stroke="#555" stroke-width="1"/><line x1="794.2" y1="512" x2="794.2" y2="514" stroke="#555" stroke-width="1"/><line x1="797.1" y1="512" x2="797.1" y2="515" stroke="#555" stroke-width="1"/><line x1="816.2" y1="512" x2="816.2" y2="514" stroke="#555" stroke-width="1"/><line x1="827.4" y1="512" x2="827.4" y2="514" stroke="#555" stroke-width="1"/><line x1="835.3" y1="512" x2="835.3" y2="514" stroke="#555" stroke-width="1"/><line x1="841.5" y1="512" x2="841.5" y2="514" stroke="#555" stroke-width="1"/><line x1="846.5" y1="512" x2="846.5" y2="514" stroke="#555" stroke-width="1"/><line x1="850.8" y1="512" x2="850.8" y2="514" stroke="#555" stroke-width="1"/><line x1="854.4" y1="512" x2="854.4" y2="514" stroke="#555" stroke-width="1"/><line x1="857.7" y1="512" x2="857.7" y2="514" stroke="#555" stroke-width="1"/><line x1="860.6" y1="512" x2="860.6" y2="515" stroke="#555" stroke-width="1"/><line x1="879.7" y1="512" x2="879.7" y2="514" stroke="#555" stroke-width="1"/><line x1="890.8" y1="512" x2="890.8" y2="514" stroke="#555" stroke-width="1"/><line x1="898.8" y1="512" x2="898.8" y2="514" stroke="#555" stroke-width="1"/><line x1="904.9" y1="512" x2="904.9" y2="514" stroke="#555" stroke-width="1"/><line x1="909.9" y1="512" x2="909.9" y2="514" stroke="#555" stroke-width="1"/><line x1="914.2" y1="512" x2="914.2" y2="514" stroke="#555" stroke-width="1"/><line x1="917.9" y1="512" x2="917.9" y2="514" stroke="#555" stroke-width="1"/><line x1="921.1" y1="512" x2="921.1" y2="514" stroke="#555" stroke-width="1"/><line x1="924.0" y1="512" x2="924.0" y2="515" stroke="#555" stroke-width="1"/>
<text x="466" y="510.3" text-anchor="end" font-family="Liberation Sans" font-size="12" fill="#1a1a1a">0.01</text><text x="466" y="457.4" text-anchor="end" font-family="Liberation Sans" font-size="12" fill="#1a1a1a">0.1</text><text x="466" y="404.6" text-anchor="end" font-family="Liberation Sans" font-size="12" fill="#1a1a1a">1</text><text x="466" y="351.8" text-anchor="end" font-family="Liberation Sans" font-size="12" fill="#1a1a1a">10</text><text x="466" y="299.0" text-anchor="end" font-family="Liberation Sans" font-size="12" fill="#1a1a1a">100</text><text x="466" y="246.1" text-anchor="end" font-family="Liberation Sans" font-size="12" fill="#1a1a1a">1000</text><text x="466" y="193.3" text-anchor="end" font-family="Liberation Sans" font-size="12" fill="#1a1a1a">10000</text><text x="480.0" y="526.7" text-anchor="middle" font-family="Liberation Sans" font-size="12" fill="#1a1a1a">100</text><text x="543.4" y="526.7" text-anchor="middle" font-family="Liberation Sans" font-size="12" fill="#1a1a1a">1000</text><text x="606.9" y="526.7" text-anchor="middle" font-family="Liberation Sans" font-size="12" fill="#1a1a1a">10000</text><text x="670.3" y="526.7" text-anchor="middle" font-family="Liberation Sans" font-size="12" fill="#1a1a1a">100000</text><text x="733.7" y="526.7" text-anchor="middle" font-family="Liberation Sans" font-size="12" fill="#1a1a1a">1e6</text><text x="797.1" y="526.7" text-anchor="middle" font-family="Liberation Sans" font-size="12" fill="#1a1a1a">1e7</text><text x="860.6" y="526.7" text-anchor="middle" font-family="Liberation Sans" font-size="12" fill="#1a1a1a">1e8</text><text x="924.0" y="526.7" text-anchor="middle" font-family="Liberation Sans" font-size="12" fill="#1a1a1a">1e9</text><text x="702.3" y="542" text-anchor="middle" font-family="Liberation Sans" font-weight="bold" font-size="13.5" fill="#000">Density * Price</text><text transform="translate(429,349) rotate(-90)" x="0" y="0" text-anchor="middle" font-family="Liberation Sans" font-weight="bold" font-size="14.2" fill="#000">Yield strength (elastic limit) (MPa)</text>
</svg>
<div style="position:absolute;left:110.6px;top:442px;font:16px 'Liberation Serif',serif;color:#000;line-height:18px;white-space:nowrap">Figure 5: Material selection for the sub-marine pressure vessels based on yielding criteria</div>
<div style="position:absolute;left:96.3px;top:488px;font:bold 16px 'Liberation Serif',serif;color:#c00000;line-height:18px;white-space:nowrap">For the second material index - <span style="display:inline-block;transform:scaleX(0.78);transform-origin:0 0;margin-right:-3.2px;-webkit-text-stroke:0.3px #c00000">M</span><span style="font-size:12.5px;position:relative;top:3px;margin-left:1px">2</span></div>
<svg style="position:absolute;left:-278px;top:-118px" width="1366" height="768" viewBox="0 0 1366 768" font-family="Liberation Serif" fill="#c00000">
<text x="627.3" y="665.9" font-weight="bold" font-size="15" textLength="13.7" lengthAdjust="spacingAndGlyphs">M</text>
<text x="640.6" y="668.6" font-weight="bold" font-size="13" textLength="6.4" lengthAdjust="spacingAndGlyphs">2</text>
<rect x="653.4" y="658.9" width="10.1" height="1.5"/><rect x="653.4" y="663.1" width="10.1" height="1.5"/>
<path d="M676.3 645.8Q668.6 661.3 676.3 676.9" fill="none" stroke="#c00000" stroke-width="1.3"/>
<text x="695.5" y="654" font-weight="bold" font-size="14.5" textLength="11" lengthAdjust="spacingAndGlyphs">K</text>
<text x="706.9" y="656.8" font-weight="bold" font-size="11" textLength="10.5" lengthAdjust="spacingAndGlyphs">IC</text>
<rect x="677.2" y="661" width="55.8" height="1.9"/>
<text x="684.5" y="677" font-weight="bold" font-size="14.5" textLength="8.7" lengthAdjust="spacingAndGlyphs">ρ</text>
<text x="696.4" y="676.6" font-weight="bold" font-size="14.5" textLength="8.6" lengthAdjust="spacingAndGlyphs">x</text>
<text x="709.7" y="676.9" font-weight="bold" font-size="15" textLength="8.9" lengthAdjust="spacingAndGlyphs">C</text>
<text x="718.8" y="679.6" font-weight="bold" font-size="10.5" textLength="9.2" lengthAdjust="spacingAndGlyphs">m</text>
<path d="M733.4 645.8Q741.1 661.3 733.4 676.9" fill="none" stroke="#c00000" stroke-width="1.3"/>
<text x="598.1" y="736.6" font-size="16" textLength="21" lengthAdjust="spacingAndGlyphs">log</text>
<text x="622.1" y="736.6" font-size="16" textLength="13.5" lengthAdjust="spacingAndGlyphs">M</text>
<text x="635.8" y="739.6" font-size="11">2</text>
<rect x="646.6" y="728.2" width="10.6" height="1.2"/><rect x="646.6" y="733.3" width="10.6" height="1.2"/>
<text x="662.8" y="736.6" font-size="16" textLength="20.5" lengthAdjust="spacingAndGlyphs">log</text>
<path d="M697 719.5Q689.5 735 697 750.5" fill="none" stroke="#c00000" stroke-width="1.1"/>
<text x="711.3" y="728.2" font-size="10.5" textLength="7" lengthAdjust="spacingAndGlyphs">K</text>
<text x="718.5" y="730" font-size="8.5" textLength="9.6" lengthAdjust="spacingAndGlyphs">IC</text>
<rect x="697" y="731.9" width="43" height="1.9"/>
<path d="M740 719.5Q747.5 735 740 750.5" fill="none" stroke="#c00000" stroke-width="1.1"/>
</svg>

<div style="position:absolute;left:318px;top:573px;font:16px 'Liberation Serif',serif;color:#c00000;line-height:18px;white-space:nowrap">Taking log on both sides</div>
<div style="position:absolute;left:0;top:0;width:793px;height:12px;background:linear-gradient(rgba(0,0,0,.17),rgba(0,0,0,.04) 50%,rgba(0,0,0,0))"></div>
</div>

<div style="position:absolute;left:0;top:118px;width:1349px;height:3px;background:linear-gradient(rgba(0,0,0,.22),rgba(0,0,0,0))"></div>

<!-- TASKBAR -->
<div style="position:absolute;left:0;top:738px;width:1366px;height:30px;background:#0a1e23"></div>
<div style="position:absolute;left:333px;top:738px;width:36px;height:30px;background:#3a4a4e"></div>
<!-- windows logo -->
<svg style="position:absolute;left:0;top:738px" width="110" height="30" viewBox="0 738 110 30">
<path d="M10 746.6L16 745.9V751.9H10z M17.1 745.8L26.2 744.8V751.9H17.1z M10 753H16V759.1L10 758.4z M17.1 753H26.2V761.3L17.1 760.2z" fill="#fff"/>
<circle cx="54" cy="753.5" r="6.6" fill="none" stroke="#fff" stroke-width="2"/>
<path d="M82.4 745V747.4H92.4V745 M82.4 760V757.6H92.4V760" fill="none" stroke="#fff" stroke-width="1"/>
<rect x="82.4" y="749.6" width="10" height="5.9" fill="none" stroke="#fff" stroke-width="1"/>
<path d="M96.5 745V747.7M96.5 752.6V760" stroke="#fff" stroke-width="1.2"/>
<rect x="94.9" y="749.2" width="3.2" height="2.9" fill="#fff"/>
</svg>
<!-- mail -->
<svg style="position:absolute;left:121px;top:745px" width="16" height="16" viewBox="0 0 16 16"><path d="M0 5.5L8 0l8 5.5V15H0z" fill="#0f6fc6"/><path d="M0 5.5L8 11l8-5.5V15H0z" fill="#28a8ea"/><path d="M2 5.5h12l-6 4z" fill="#fff"/><path d="M0 15l8-6 8 6z" fill="#50c0f0"/></svg>
<!-- chromium-like blue -->
<svg style="position:absolute;left:158px;top:745px" width="16" height="16" viewBox="0 0 16 16"><circle cx="8" cy="8" r="7.5" fill="#7a9ee8"/><circle cx="8" cy="8" r="5" fill="#5d84dc"/><circle cx="8" cy="8" r="3.4" fill="#d8e4fb"/><circle cx="8" cy="8" r="2.6" fill="#5a82e0"/></svg>
<!-- app laptop -->
<svg style="position:absolute;left:195px;top:745px" width="16" height="16" viewBox="0 0 16 16"><path d="M3 1.5l11 1-2 10H1z" fill="#2f7fb8"/><path d="M4 3l8.8.8-1.5 7.7H2.5z" fill="#8fd0ef"/><path d="M0 12.5h12.5l-1 2H.5z" fill="#4a5a66"/><circle cx="7.5" cy="7.5" r="2" fill="#fff"/></svg>
<!-- green arrow -->
<svg style="position:absolute;left:233px;top:745px" width="14" height="16" viewBox="0 0 14 16"><rect x="0" y="2" width="14" height="14" fill="#1f63c8"/><rect x="0" y="2" width="14" height="7" fill="#e8f2fb"/><path d="M7 0l5 5H9v4H5V5H2z" fill="#7ed321"/><ellipse cx="7" cy="12.5" rx="4" ry="1" fill="#9cc0f0"/></svg>
<!-- avast -->
<svg style="position:absolute;left:269px;top:745px" width="16" height="16" viewBox="0 0 16 16"><circle cx="8" cy="8" r="8" fill="#f5a623"/><path d="M8 0a8 8 0 0 1 7.6 5.5L8 8z" fill="#8b5cf6"/><path d="M0.5 5A8 8 0 0 0 5 15.5L8 8z" fill="#ff7a00"/><path d="M4.5 4.5h7l-.5 5.5L8 13l-3-3z" fill="#fff"/><rect x="7.3" y="6.5" width="1.4" height="2.6" fill="#2b2f5b"/></svg>
<!-- firefox -->
<svg style="position:absolute;left:306px;top:745px" width="16" height="16" viewBox="0 0 16 16"><circle cx="8" cy="8.5" r="7.5" fill="#ff5a3c"/><path d="M8 1a7.5 7.5 0 0 1 7.5 7.5 7 7 0 0 1-2 5L10 6z" fill="#ffb326"/><path d="M1 7a7.5 7.5 0 0 0 7 9 7 7 0 0 0 5-2z" fill="#e0217a"/><circle cx="8.2" cy="9" r="3.6" fill="#7b3fe4"/><path d="M3 2c1 1 1 2 2 3" stroke="#ffb326" stroke-width="2"/></svg>
<!-- chrome -->
<svg style="position:absolute;left:344px;top:745px" width="16" height="16" viewBox="0 0 16 16"><circle cx="8" cy="8" r="7.5" fill="#1da462"/><path d="M8 .5a7.5 7.5 0 0 1 6.5 3.75H8a3.75 3.75 0 0 0-3.3 2L1.9 3.6A7.5 7.5 0 0 1 8 .5z" fill="#dd5144"/><path d="M14.5 4.25A7.5 7.5 0 0 1 8 15.5l3.2-5.6A3.75 3.75 0 0 0 11.2 6z" fill="#ffcd46"/><circle cx="8" cy="8" r="3.6" fill="#fff"/><circle cx="8" cy="8" r="2.8" fill="#4c8bf5"/></svg>
<!-- acrobat -->
<svg style="position:absolute;left:380px;top:745px" width="16" height="16" viewBox="0 0 16 16"><path d="M1 0h14v16H1z" fill="#c8000a"/><path d="M0 1.5h15v14.5H0z" fill="#e0161e" opacity=".9"/><path d="M3 13.5c2-3 4-7 4.5-10 .3-1.5 1.3-1 1 .5-.5 3 2 6 5 6.5M4 12c3-1.5 6-2 9-1.5" fill="none" stroke="#fff" stroke-width="1"/></svg>
<!-- explorer -->
<svg style="position:absolute;left:417px;top:745px" width="16" height="16" viewBox="0 0 16 16"><path d="M0 2h6l1.5 1.5H16V15H0z" fill="#e8b84a"/><path d="M0 5h16v10H0z" fill="#ffd766"/><path d="M4 9.5h8V15H10v-3H6v3H4z" fill="#1f8fe0"/></svg>
<!-- doc app -->
<svg style="position:absolute;left:455px;top:745px" width="15" height="16" viewBox="0 0 15 16"><rect x="0" y="0" width="15" height="16" fill="#4e7aa8"/><rect x="1.5" y="1.5" width="12" height="12.5" fill="#e8eef5"/><path d="M4 5h3l-1.5-3z" fill="#f08a1c"/><path d="M3.5 7h8M3.5 9h8M3.5 11h8M8 4h3.5M8 5.5h3.5" stroke="#6a8fb8" stroke-width="1"/><rect x="0" y="14.5" width="15" height="1.5" fill="#9cc"/></svg>
<!-- word -->
<svg style="position:absolute;left:491px;top:745px" width="16" height="16" viewBox="0 0 16 16"><rect x="5" y="1" width="11" height="14" fill="#fff"/><path d="M7 4h7M7 6.5h7M7 9h7M7 11.5h7" stroke="#41a5ee" stroke-width="1"/><path d="M0 2l9.5-2v16L0 14z" fill="#2b579a"/><text x="1.3" y="11" font-family="Liberation Sans" font-weight="bold" font-size="7.5" fill="#fff">W</text></svg>
<!-- running underlines -->
<div style="position:absolute;left:300px;top:766px;width:28px;height:2px;background:#a6e8f2"></div>
<div style="position:absolute;left:333px;top:766px;width:36px;height:2px;background:#a6e8f2"></div>
<div style="position:absolute;left:374px;top:766px;width:19px;height:2px;background:#a6e8f2"></div><div style="position:absolute;left:393px;top:766px;width:9px;height:2px;background:#6fa0a8"></div>
<div style="position:absolute;left:411px;top:766px;width:19px;height:2px;background:#a6e8f2"></div><div style="position:absolute;left:430px;top:766px;width:9px;height:2px;background:#6fa0a8"></div>
<div style="position:absolute;left:448px;top:766px;width:28px;height:2px;background:#a6e8f2"></div>
<div style="position:absolute;left:485px;top:766px;width:19px;height:2px;background:#a6e8f2"></div><div style="position:absolute;left:504px;top:766px;width:9px;height:2px;background:#6fa0a8"></div>
<!-- tray -->
<svg style="position:absolute;left:1098px;top:744px" width="17" height="17" viewBox="0 0 17 17"><circle cx="10.5" cy="4" r="2.7" fill="none" stroke="#fff" stroke-width="1.1"/><path d="M7 12.5c.3-3 1.7-5 3.5-5s3.2 2 3.6 4.5" fill="none" stroke="#fff" stroke-width="1.1"/><circle cx="5" cy="8.5" r="2.7" fill="none" stroke="#fff" stroke-width="1.1"/><path d="M1 16.5c.3-3 2-5 4-5s3.7 2 4 5" fill="none" stroke="#fff" stroke-width="1.1"/></svg>
<svg style="position:absolute;left:1129px;top:748px" width="14" height="9" viewBox="0 0 14 9"><path d="M1 8l6-6.5L13 8" fill="none" stroke="#fff" stroke-width="1.1"/></svg>
<svg style="position:absolute;left:1150px;top:745px" width="18" height="17" viewBox="0 0 18 17"><path d="M6 9a9 9 0 0 1 10-6M8 11.5a6 6 0 0 1 7.5-4.5M10.5 13.5a3 3 0 0 1 5-3" fill="none" stroke="#8a9598" stroke-width="1"/><circle cx="15.5" cy="14.5" r="1" fill="#8a9598"/><circle cx="6" cy="11" r="4.6" fill="#e81123"/><path d="M4.2 9.2l3.6 3.6M7.8 9.2l-3.6 3.6" stroke="#fff" stroke-width="1.1"/></svg>
<svg style="position:absolute;left:1175px;top:746px" width="18" height="15" viewBox="0 0 18 15"><path d="M1 4.5h3l4-3.5v13L4 10.5H1z" fill="none" stroke="#fff" stroke-width="1.1"/><path d="M10.5 5a3.5 3.5 0 0 1 0 5" fill="none" stroke="#fff" stroke-width="1.1"/><path d="M12.5 3a6.5 6.5 0 0 1 0 9M14.5 1a9.5 9.5 0 0 1 0 13" fill="none" stroke="#9aa" stroke-width="1"/></svg>
<svg style="position:absolute;left:1199px;top:746px" width="18" height="13" viewBox="0 0 18 13"><path d="M2 1v3M4.5 1v3M1 4h5v2.5a2.5 2.5 0 0 1-5 0zM3.5 9v4" fill="none" stroke="#fff" stroke-width="1.1"/><rect x="6.5" y="3.5" width="9.5" height="7.5" fill="none" stroke="#fff" stroke-width="1.1"/><rect x="16" y="5.5" width="1.3" height="3.5" fill="#fff"/><path d="M7.5 10.5v-3l3 3z" fill="#fff"/></svg>
<svg style="position:absolute;left:1227px;top:744px" width="18" height="17" viewBox="0 0 18 17"><path d="M5 14L12.5 2.5a1.5 1.5 0 0 1 2.5 1.6L7.5 15.5 4.5 16.5z" fill="none" stroke="#fff" stroke-width="1.1"/><path d="M11 5l2.5 1.6" stroke="#fff" stroke-width="1"/><path d="M4 10.5a3 3 0 0 0-2.5 5M14 8.5a2 2 0 0 1 2.5 2.5H13" fill="none" stroke="#fff" stroke-width="1.1"/></svg>
<div style="position:absolute;left:1259px;top:746px;font:12px 'Liberation Sans',sans-serif;transform:scaleX(0.91);transform-origin:0 0;color:#fff;line-height:14px;white-space:nowrap">10:00 PM</div>
<svg style="position:absolute;left:1324px;top:744px" width="18" height="17" viewBox="0 0 18 17"><path d="M1 1h16v12.5h-6.3L9 16.2 7.3 13.5H1z" fill="#fff"/><path d="M4 4.5h10M4 7h10M4 9.5h6" stroke="#0a1e23" stroke-width="1.1"/></svg>
<div style="position:absolute;left:1361px;top:738px;width:1px;height:30px;background:#3d4e52"></div>

</body></html>
